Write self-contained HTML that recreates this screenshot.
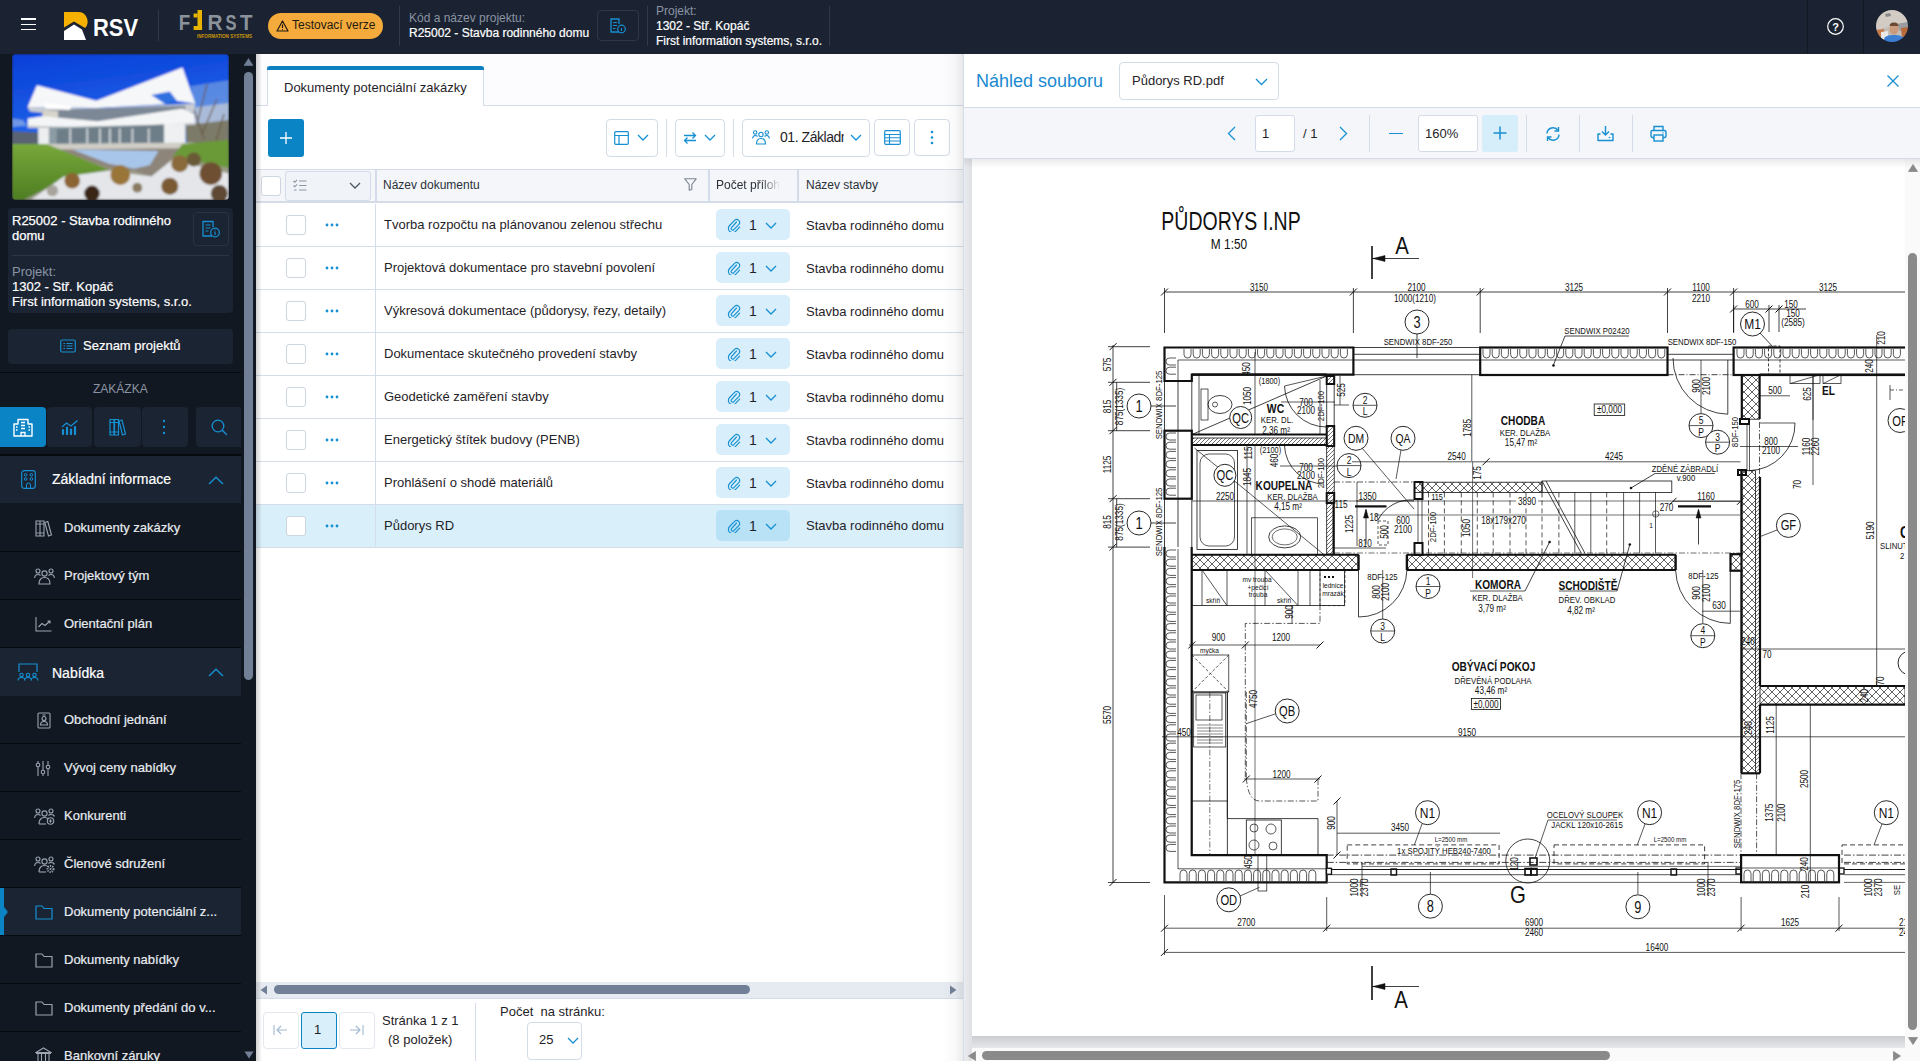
<!DOCTYPE html>
<html><head><meta charset="utf-8">
<style>
*{box-sizing:border-box;margin:0;padding:0}
html,body{width:1920px;height:1061px;overflow:hidden;background:#fff;font-family:"Liberation Sans",sans-serif;color:#1f2328}
.a{position:absolute}
svg{display:block}
#hdr{left:0;top:0;width:1920px;height:54px;background:#1b2332}
.vd{position:absolute;width:1px;background:#2e3a4c}
.wt{color:#fff;-webkit-text-stroke:0.2px #fff}
.gt{color:#8a94a3}
#side{left:0;top:54px;width:256px;height:1007px;background:#121821;overflow:hidden}
.card{position:absolute;background:#1b2433;border-radius:4px}
.item{position:absolute;left:0;width:241px;height:48px;border-bottom:1px solid #05080c}
.item .t{position:absolute;left:64px;top:16px;font-size:13px;color:#e8ecf1;white-space:nowrap;-webkit-text-stroke:0.2px #e8ecf1}
.item svg{position:absolute;left:34px;top:14px}
.sec{position:absolute;left:0;width:241px;height:48px;background:#1b2433}
.tx{font-size:13px;color:#1f2328;white-space:nowrap}
.btn{border:1px solid #d3dce8;border-radius:4px;background:#fff}
.sec .t{position:absolute;left:52px;top:15px;font-size:14px;color:#fff;-webkit-text-stroke:0.2px #fff}
</style></head><body>
<!-- HEADER -->
<div id="hdr" class="a">
  <div class="a" style="left:21px;top:18px;width:15px;height:1.5px;background:#fff"></div>
  <div class="a" style="left:21px;top:23.5px;width:15px;height:1.5px;background:#fff"></div>
  <div class="a" style="left:21px;top:28.5px;width:15px;height:1.5px;background:#fff"></div>
  <!-- RSV logo -->
  <svg class="a" style="left:63px;top:11px" width="76" height="31" viewBox="0 0 76 31">
    <path d="M1 1 H14.5 A9.5 9.5 0 0 1 22 17 L11 10.5 L1 16.5 Z" fill="#f6b000"/>
    <path d="M1 20 L11 13.5 L19 18.5 L23 29 H1 Z" fill="#fff"/>
    <text x="30" y="25.3" font-family="Liberation Sans" font-weight="bold" font-size="23" fill="#fff" textLength="45" lengthAdjust="spacingAndGlyphs">RSV</text>
  </svg>
  <div class="vd" style="left:158px;top:10px;height:31px"></div>
  <!-- FIRST logo -->
  <svg class="a" style="left:178px;top:9px" width="76" height="31" viewBox="0 0 76 31">
    <g font-family="Liberation Sans" font-weight="bold" font-size="22" fill="#8a929c">
    <text x="0.75" y="21" textLength="11.5" lengthAdjust="spacingAndGlyphs">F</text>
    <text x="29.5" y="21" textLength="15" lengthAdjust="spacingAndGlyphs">R</text>
    <text x="47.5" y="21" textLength="11" lengthAdjust="spacingAndGlyphs">S</text>
    <text x="62" y="21" textLength="12.5" lengthAdjust="spacingAndGlyphs">T</text>
    </g>
    <rect x="19.5" y="1" width="4.5" height="20" fill="#e8b400"/>
    <rect x="15.6" y="4.5" width="4" height="4" fill="#e8b400"/>
    <rect x="15.6" y="17" width="8.5" height="4" fill="#e8b400"/>
    <text x="19" y="28.8" font-family="Liberation Sans" font-weight="bold" font-size="5.5" fill="#c9960a" textLength="55" lengthAdjust="spacingAndGlyphs">INFORMATION SYSTEMS</text>
  </svg>
  <div class="a" style="left:268px;top:13px;width:115px;height:26px;border-radius:13px;background:#f5ab3c"></div>
  <svg class="a" style="left:276px;top:20px" width="13" height="12" viewBox="0 0 13 12"><path d="M6.5 1 L12 11 H1 Z" fill="none" stroke="#1f1a10" stroke-width="1.2" stroke-linejoin="round"/><path d="M6.5 4.5 V8" stroke="#1f1a10" stroke-width="1.2"/><circle cx="6.5" cy="9.5" r="0.6" fill="#1f1a10"/></svg>
  <div class="a" style="left:292px;top:18px;font-size:12px;color:#1f1a10">Testovací verze</div>
  <div class="vd" style="left:399px;top:6px;height:40px"></div>
  <div class="a gt" style="left:409px;top:11px;font-size:12px">Kód a název projektu:</div>
  <div class="a wt" style="left:409px;top:26px;font-size:12px">R25002 - Stavba rodinného domu</div>
  <div class="a" style="left:597px;top:10px;width:42px;height:31px;border:1px solid #2c3849;border-radius:4px"></div>
  <svg class="a" style="left:609px;top:18px" width="18" height="16" viewBox="0 0 18 16"><path d="M10 14 H2 V1 H10 V6" fill="none" stroke="#1690d2" stroke-width="1.3"/><path d="M4 4.5 H8 M4 7.5 H8 M4 10.5 H6.5" stroke="#1690d2" stroke-width="1.2"/><circle cx="12.5" cy="11" r="3.8" fill="none" stroke="#1690d2" stroke-width="1.2"/><path d="M12.5 10 V13" stroke="#1690d2" stroke-width="1.1"/></svg>
  <div class="vd" style="left:647px;top:6px;height:40px"></div>
  <div class="a gt" style="left:656px;top:4px;font-size:12px">Projekt:</div>
  <div class="a wt" style="left:656px;top:19px;font-size:12px">1302 - Stř. Kopáč</div>
  <div class="a wt" style="left:656px;top:34px;font-size:12px">First information systems, s.r.o.</div>
  <div class="vd" style="left:829px;top:6px;height:40px"></div>
  <div class="a" style="left:1807px;top:0;width:1px;height:54px;background:#111822"></div>
  <div class="a" style="left:1863px;top:0;width:1px;height:54px;background:#111822"></div>
  <svg class="a" style="left:1826px;top:17px" width="19" height="19" viewBox="0 0 19 19"><circle cx="9.5" cy="9.5" r="7.8" fill="none" stroke="#fff" stroke-width="1.2"/><text x="9.5" y="13.5" text-anchor="middle" font-family="Liberation Sans" font-weight="bold" font-size="11" fill="#fff">?</text></svg>
  <svg class="a" style="left:1876px;top:10px" width="32" height="32" viewBox="0 0 32 32"><defs><clipPath id="av"><circle cx="16" cy="16" r="16"/></clipPath><filter id="avb"><feGaussianBlur stdDeviation="0.6"/></filter></defs>
  <g clip-path="url(#av)" filter="url(#avb)"><rect width="32" height="32" fill="#c4bdb5"/><path d="M0 0 H32 V12 L0 20 Z" fill="#d2ccc4"/><path d="M9 4 L14 3 L15 6 L10 7 Z" fill="#8a8a8a"/><path d="M20 14 L32 12 L32 20 L24 21 Z" fill="#9a9ca0"/>
  <path d="M0 20 L8 19 L9 28 L0 30 Z" fill="#c77a48"/><path d="M5 22 L12 21 L12 30 L5 31 Z" fill="#e8e8e6"/><path d="M25 18 L32 17 L32 26 L26 27 Z" fill="#b86a3a"/>
  <ellipse cx="18" cy="19" rx="4.6" ry="5.8" fill="#c99a7c"/><path d="M13.5 16 Q14 12 18 12.5 Q22 12 22.5 16 Z" fill="#6a4a30"/>
  <path d="M7 32 L9 27 Q13 24.5 18 25 Q23 24.5 27 27 L29 32 Z" fill="#3a7ed4"/></g></svg>
</div>


<!-- SIDEBAR -->
<div id="side" class="a">
  <svg class="a" style="left:12px;top:0px" width="217" height="146" viewBox="0 0 217 146">
    <defs>
      <linearGradient id="sky" x1="0" y1="0" x2="0.2" y2="1"><stop offset="0" stop-color="#0a3fd8"/><stop offset="0.5" stop-color="#1a5ee6"/><stop offset="0.8" stop-color="#4d8ae6"/></linearGradient>
      <linearGradient id="grass" x1="0" y1="0" x2="0" y2="1"><stop offset="0" stop-color="#78a83a"/><stop offset="1" stop-color="#4e7e22"/></linearGradient>
      <filter id="bl"><feGaussianBlur stdDeviation="1"/></filter>
      <clipPath id="pc"><rect width="217" height="146" rx="4"/></clipPath>
    </defs>
    <g clip-path="url(#pc)" filter="url(#bl)"><rect width="217" height="146" fill="url(#sky)"/><rect x="0" y="90" width="217" height="56" fill="#9a9a86"/>
<path d="M179.0 31.9 L216.9 26.3 L216.9 63.0 L181.8 60.2 Z" fill="#8fb0e0" opacity="0.55"/>
<path d="M0.1 64.5 L10.7 65.9 L15.0 71.5 L0.1 72.9 Z" fill="#a9c2e6" opacity="0.6"/>
<path d="M0.1 77.2 L26.3 78.6 L26.3 89.9 L0.1 89.9 Z" fill="#5a6472" />
<path d="M173.3 54.6 L216.9 48.9 L216.9 77.2 L176.2 77.2 Z" fill="#a9bbd8" /><path d="M173.3 71.5 L216.9 65.9 L216.9 97.0 L174.8 88.5 Z" fill="#7c7a68" /><path d="M195 30 L185 70 M205 45 L190 80 M180 50 L192 85 M212 60 L200 100" stroke="#6a5a4a" stroke-width="1.2" fill="none"/>
<path d="M15.7 53.1 L84.3 54.6 L183.2 49.6 L181.8 57.4 L84.3 64.5 L17.8 57.4 Z" fill="#c9cdd3" />
<path d="M30.5 56.0 L173.3 51.7 L173.3 61.6 L85.7 68.0 L30.5 64.5 Z" fill="#7d8896" />
<path d="M30.5 56.0 L46.1 56.7 L46.1 64.5 L30.5 64.5 Z" fill="#d8d4cc" />
<path d="M139.4 41.1 L157.8 37.6 L164.9 46.8 L153.5 50.3 Z" fill="#2f6fe0" />
<path d="M15.7 53.1 L24.9 31.2 L84.3 46.8 L170.5 13.6 L183.2 49.6 L164.9 46.8 L157.8 37.6 L139.4 41.1 L153.5 50.3 L84.3 53.9 Z" fill="#f6f7f8" />
<path d="M31.9 48.9 L60.2 52.4 L57.4 56.0 L33.4 54.6 Z" fill="#ffffff" />
<path d="M15.7 64.5 L30.5 62.3 L85.7 67.3 L170.5 54.6 L181.8 60.2 L183.2 70.1 L85.7 75.1 L15.7 73.7 Z" fill="#f4f5f6" />
<path d="M15.7 71.5 L85.7 73.7 L183.2 68.7 L183.2 70.8 L85.7 75.5 L15.7 74.1 Z" fill="#c4c8ce" />
<path d="M26.3 73.7 L173.3 70.1 L173.3 90.6 L26.3 90.6 Z" fill="#8c9ca4" />
<path d="M44.7 75.1 L152.1 70.8 L152.1 89.9 L44.7 89.9 Z" fill="#6e7e88" />
<path d="M26.3 73.7 L36.9 73.7 L36.9 90.6 L26.3 90.6 Z" fill="#eceef0" />
<path d="M152.1 70.1 L173.3 69.4 L173.3 90.6 L152.1 90.6 Z" fill="#eef0f2" />
<path d="M57.4 74.4 L59.1 74.4 L59.1 89.9 L57.4 89.9 Z" fill="#d6dadd" />
<path d="M74.4 74.4 L76.1 74.4 L76.1 89.9 L74.4 89.9 Z" fill="#d6dadd" />
<path d="M87.1 74.4 L88.8 74.4 L88.8 89.9 L87.1 89.9 Z" fill="#d6dadd" />
<path d="M97.0 74.4 L98.7 74.4 L98.7 89.9 L97.0 89.9 Z" fill="#d6dadd" />
<path d="M106.9 74.4 L108.6 74.4 L108.6 89.9 L106.9 89.9 Z" fill="#d6dadd" />
<path d="M119.6 74.4 L121.3 74.4 L121.3 89.9 L119.6 89.9 Z" fill="#d6dadd" />
<path d="M135.9 74.4 L137.6 74.4 L137.6 89.9 L135.9 89.9 Z" fill="#d6dadd" />
<path d="M30.5 89.9 L181.8 88.5 L173.3 97.0 L51.7 97.0 Z" fill="#cfcdc6" />
<path d="M44.7 95.6 L173.3 94.2 L139.4 122.4 L122.4 116.8 L97.0 114.0 Z" fill="#8e857a" />
<path d="M60.2 95.6 L146.5 97.0 L138.0 111.1 L122.4 114.7 L97.0 109.7 Z" fill="#a8c6ea" />
<path d="M0.1 89.9 L34.8 89.9 L51.7 97.0 L97.0 115.4 L51.7 125.3 L12.1 145.8 L0.1 145.8 Z" fill="url(#grass)" />
<path d="M170.5 89.9 L216.9 85.7 L216.9 114.0 L160.6 102.6 Z" fill="#6a9a38" />
<path d="M19.2 145.8 L51.7 122.4 L97.0 116.8 L139.4 122.4 L160.6 105.5 L216.9 119.6 L216.9 145.8 Z" fill="#e4e6ea" />
<circle cx="108.3" cy="121.0" r="9.9" fill="#9a7438"/>
<circle cx="60.2" cy="126.7" r="7.8" fill="#8c6430"/>
<circle cx="80.0" cy="139.4" r="7.8" fill="#3a2816"/>
<circle cx="157.8" cy="132.3" r="8.5" fill="#7a5a32"/>
<circle cx="167.7" cy="109.7" r="8.5" fill="#8a6a3a"/>
<circle cx="198.8" cy="119.6" r="11.3" fill="#6e5030"/>
<circle cx="181.8" cy="105.5" r="7.1" fill="#6a5a38"/>
<circle cx="125.3" cy="133.7" r="4.9" fill="#8a7a60"/>
<circle cx="40.4" cy="136.6" r="5.7" fill="#a8a49c"/>
<circle cx="207.3" cy="139.4" r="8.5" fill="#5e4a34"/></g></svg>
  <div class="card" style="left:8px;top:154px;width:225px;height:105px"></div>
  <div class="a wt" style="left:12px;top:159px;font-size:13px;line-height:15px;width:178px;-webkit-text-stroke:0.25px #fff">R25002 - Stavba rodinného domu</div>
  <div class="a" style="left:193px;top:158px;width:36px;height:34px;border:1px solid #263245;border-radius:4px"></div>
  <svg class="a" style="left:201px;top:166px" width="20" height="18" viewBox="0 0 20 18"><path d="M11 16 H2 V1.5 H12 V7" fill="none" stroke="#1690d2" stroke-width="1.3"/><path d="M4.5 5 H9.5 M4.5 8 H9.5 M4.5 11 H7.5" stroke="#1690d2" stroke-width="1.2"/><circle cx="14" cy="12.5" r="4.3" fill="none" stroke="#1690d2" stroke-width="1.2"/><path d="M14 11.5 V15" stroke="#1690d2" stroke-width="1.2"/><circle cx="14" cy="10" r="0.6" fill="#1690d2"/></svg>
  <div class="a" style="left:12px;top:201px;width:217px;height:1px;background:#2a3648"></div>
  <div class="a gt" style="left:12px;top:210px;font-size:13px;line-height:15px">Projekt:</div>
  <div class="a wt" style="left:12px;top:225px;font-size:13px;line-height:15px">1302 - Stř. Kopáč</div>
  <div class="a wt" style="left:12px;top:240px;font-size:13px;line-height:15px">First information systems, s.r.o.</div>

  <div class="card" style="left:8px;top:275px;width:225px;height:35px"></div>
  <svg class="a" style="left:60px;top:285px" width="16" height="14" viewBox="0 0 16 14"><rect x="0.7" y="1" width="14.6" height="12" rx="1.5" fill="none" stroke="#1690d2" stroke-width="1.2"/><path d="M3.5 4.5 H5 M3.5 7 H5 M3.5 9.5 H5 M6.5 4.5 H12.5 M6.5 7 H12.5 M6.5 9.5 H12.5" stroke="#1690d2" stroke-width="1.2"/></svg>
  <div class="a wt" style="left:83px;top:284px;font-size:13px;line-height:15px">Seznam projektů</div>

  <div class="a" style="left:0;top:318px;width:241px;height:1px;background:#070a0f"></div>
  <div class="a" style="left:93px;top:328px;font-size:12px;color:#8b95a3">ZAKÁZKA</div>
  <div class="a" style="left:0;top:353px;width:46px;height:40px;background:#0b84c6;border-radius:0 4px 4px 0"></div>
  <div class="card" style="left:47px;top:353px;width:45px;height:40px"></div>
  <div class="card" style="left:94px;top:353px;width:47px;height:40px"></div>
  <div class="card" style="left:142px;top:353px;width:46px;height:40px"></div>
  <div class="card" style="left:196px;top:353px;width:45px;height:40px;border-radius:4px 0 0 4px"></div>
  <!-- icon: building (white) -->
  <svg class="a" style="left:13px;top:364px" width="20" height="19" viewBox="0 0 20 19"><path d="M1 18 V6 H5 V1.5 H15 V6 H19 V18 Z" fill="none" stroke="#fff" stroke-width="1.4" stroke-linejoin="round"/><path d="M8 18 V14.5 H12 V18" fill="none" stroke="#fff" stroke-width="1.3"/><path d="M8 4.5 H12 M8 7.5 H12 M8 10.5 H12 M3 9 H4.5 M3 12 H4.5 M15.5 9 H17 M15.5 12 H17" stroke="#fff" stroke-width="1.5"/></svg>
  <!-- icon: chart -->
  <svg class="a" style="left:61px;top:365px" width="18" height="16" viewBox="0 0 18 16"><path d="M1 8 L5.5 4 L10 7 L16.5 1.5" fill="none" stroke="#1690d2" stroke-width="1.3"/><path d="M2 15 V11 M6 15 V8.5 M10 15 V10.5 M14 15 V8" stroke="#1690d2" stroke-width="2.2" stroke-linecap="round"/></svg>
  <!-- icon: books -->
  <svg class="a" style="left:109px;top:364px" width="17" height="18" viewBox="0 0 17 18"><path d="M1 1.5 H5 V17 H1 Z M5.5 1.5 H9.5 V17 H5.5 Z" fill="none" stroke="#1690d2" stroke-width="1.2"/><path d="M10 3 L13 2 L16.5 16 L13.5 17 Z" fill="none" stroke="#1690d2" stroke-width="1.2"/><path d="M1 4.5 H9.5 M1 14 H9.5" stroke="#1690d2" stroke-width="1"/></svg>
  <!-- icon: vertical dots -->
  <svg class="a" style="left:162px;top:365px" width="4" height="16" viewBox="0 0 4 16"><circle cx="2" cy="2" r="1.2" fill="#1690d2"/><circle cx="2" cy="8" r="1.2" fill="#1690d2"/><circle cx="2" cy="14" r="1.2" fill="#1690d2"/></svg>
  <!-- icon: search -->
  <svg class="a" style="left:211px;top:365px" width="17" height="17" viewBox="0 0 17 17"><circle cx="7" cy="7" r="5.8" fill="none" stroke="#1690d2" stroke-width="1.3"/><path d="M11.3 11.3 L16 16" stroke="#1690d2" stroke-width="1.3"/></svg>

  <div class="a" style="left:0;top:400px;width:241px;height:2px;background:#070a0f"></div>
  <div class="sec" style="top:402px;height:47px"><div class="t">Základní informace</div>
    <svg class="a" style="left:21px;top:14px" width="15" height="19" viewBox="0 0 15 19"><rect x="0.7" y="0.7" width="13.6" height="17.6" rx="2.5" fill="none" stroke="#1690d2" stroke-width="1.2"/><circle cx="4.6" cy="4.8" r="1.3" fill="none" stroke="#1690d2" stroke-width="1"/><circle cx="10.4" cy="4.8" r="1.3" fill="none" stroke="#1690d2" stroke-width="1"/><circle cx="4.6" cy="9" r="1.3" fill="none" stroke="#1690d2" stroke-width="1"/><circle cx="10.4" cy="9" r="1.3" fill="none" stroke="#1690d2" stroke-width="1"/><path d="M5.5 18 V15 A2 2 0 0 1 9.5 15 V18" fill="none" stroke="#1690d2" stroke-width="1"/></svg>
    <svg class="a" style="left:208px;top:20px" width="16" height="9" viewBox="0 0 16 9"><path d="M1 8 L8 1.3 L15 8" fill="none" stroke="#1690d2" stroke-width="1.5"/></svg>
  </div>
  <div class="item" style="top:450px;"><div class="t" style="top:16px">Dokumenty zakázky</div><svg class="a" style="left:35px;top:16px" width="18" height="17" viewBox="0 0 18 17"><path d="M1 1 H5 V16 H1 Z M5 1 H9 V16 H5 Z" fill="none" stroke="#9aa4b2" stroke-width="1.1"/><path d="M9.8 2.5 L12.8 1.5 L16.5 15 L13.5 16 Z" fill="none" stroke="#9aa4b2" stroke-width="1.1"/><path d="M1 4 H9 M1 13 H9" stroke="#9aa4b2" stroke-width="0.9"/></svg></div>
<div class="item" style="top:498px;"><div class="t" style="top:16px">Projektový tým</div><svg class="a" style="left:34px;top:16px" width="21" height="17" viewBox="0 0 21 17"><circle cx="10.5" cy="5.5" r="2.6" fill="none" stroke="#9aa4b2" stroke-width="1.1"/><path d="M5 16 C5 11 8 9.5 10.5 9.5 C13 9.5 16 11 16 16 Z" fill="none" stroke="#9aa4b2" stroke-width="1.1"/><circle cx="4" cy="3" r="2" fill="none" stroke="#9aa4b2" stroke-width="1.1"/><circle cx="17" cy="3" r="2" fill="none" stroke="#9aa4b2" stroke-width="1.1"/><path d="M0.6 10 C0.8 7.5 2.5 6.5 4 6.5 C5 6.5 6 7 6.5 7.5 M20.4 10 C20.2 7.5 18.5 6.5 17 6.5 C16 6.5 15 7 14.5 7.5" fill="none" stroke="#9aa4b2" stroke-width="1.1"/></svg></div>
<div class="item" style="top:546px;"><div class="t" style="top:16px">Orientační plán</div><svg class="a" style="left:35px;top:16px" width="17" height="16" viewBox="0 0 17 16"><path d="M1 1 V15 H16.5" fill="none" stroke="#9aa4b2" stroke-width="1.1"/><path d="M3.5 11 L7 7.5 L10 9.5 L15 5 M12.5 5 H15 V7.5" fill="none" stroke="#9aa4b2" stroke-width="1.1"/></svg></div>
<div class="sec" style="top:594px;height:48px"><div class="t" style="top:17px">Nabídka</div>
    <svg class="a" style="left:17px;top:15px" width="22" height="18" viewBox="0 0 22 18"><path d="M2 9 V1 H20 V9" fill="none" stroke="#1690d2" stroke-width="1.2"/><circle cx="4.5" cy="12" r="1.7" fill="none" stroke="#1690d2" stroke-width="1.1"/><circle cx="11" cy="12" r="1.7" fill="none" stroke="#1690d2" stroke-width="1.1"/><circle cx="17.5" cy="12" r="1.7" fill="none" stroke="#1690d2" stroke-width="1.1"/><path d="M1 17.5 C1 15 2.5 14.5 4.5 14.5 C6.5 14.5 8 15 8 17.5 M7.5 17.5 C7.5 15 9 14.5 11 14.5 C13 14.5 14.5 15 14.5 17.5 M14 17.5 C14 15 15.5 14.5 17.5 14.5 C19.5 14.5 21 15 21 17.5" fill="none" stroke="#1690d2" stroke-width="1.1"/></svg>
    <svg class="a" style="left:208px;top:20px" width="16" height="9" viewBox="0 0 16 9"><path d="M1 8 L8 1.3 L15 8" fill="none" stroke="#1690d2" stroke-width="1.5"/></svg>
  </div>
<div class="item" style="top:642px;"><div class="t" style="top:16px">Obchodní jednání</div><svg class="a" style="left:37px;top:16px" width="14" height="17" viewBox="0 0 14 17"><rect x="1" y="1" width="12" height="15" rx="1" fill="none" stroke="#9aa4b2" stroke-width="1.1"/><circle cx="7" cy="6.5" r="2" fill="none" stroke="#9aa4b2" stroke-width="1.1"/><path d="M3.5 13 C3.5 10.5 5 9.5 7 9.5 C9 9.5 10.5 10.5 10.5 13 Z" fill="none" stroke="#9aa4b2" stroke-width="1.1"/><path d="M5.5 3 H8.5" stroke="#9aa4b2" stroke-width="1"/></svg></div>
<div class="item" style="top:690px;"><div class="t" style="top:16px">Vývoj ceny nabídky</div><svg class="a" style="left:35px;top:16px" width="16" height="17" viewBox="0 0 16 17"><path d="M3 1 V16 M8 1 V16 M13 1 V16" stroke="#9aa4b2" stroke-width="1.1"/><circle cx="3" cy="5" r="1.8" fill="#131922" stroke="#9aa4b2" stroke-width="1.1"/><circle cx="8" cy="12" r="1.8" fill="#131922" stroke="#9aa4b2" stroke-width="1.1"/><circle cx="13" cy="7" r="1.8" fill="#131922" stroke="#9aa4b2" stroke-width="1.1"/></svg></div>
<div class="item" style="top:738px;"><div class="t" style="top:16px">Konkurenti</div><svg class="a" style="left:34px;top:16px" width="21" height="17" viewBox="0 0 21 17"><circle cx="10.5" cy="5.5" r="2.6" fill="none" stroke="#9aa4b2" stroke-width="1.1"/><path d="M5 16 C5 11 8 9.5 10.5 9.5 C12 9.5 13.5 10 14.5 11" fill="none" stroke="#9aa4b2" stroke-width="1.1"/><path d="M5 16 H12" stroke="#9aa4b2" stroke-width="1.1"/><circle cx="4" cy="3" r="2" fill="none" stroke="#9aa4b2" stroke-width="1.1"/><circle cx="17" cy="3" r="2" fill="none" stroke="#9aa4b2" stroke-width="1.1"/><path d="M0.6 10 C0.8 7.5 2.5 6.5 4 6.5 C5 6.5 6 7 6.5 7.5 M20.4 8.5 C20 7 18.5 6.5 17 6.5 C16 6.5 15 7 14.5 7.5" fill="none" stroke="#9aa4b2" stroke-width="1.1"/><circle cx="16.5" cy="13" r="3.2" fill="none" stroke="#9aa4b2" stroke-width="1.1"/><path d="M16.5 11.3 V14.7 M14.8 13 H18.2" stroke="#9aa4b2" stroke-width="1"/></svg></div>
<div class="item" style="top:786px;"><div class="t" style="top:16px">Členové sdružení</div><svg class="a" style="left:34px;top:16px" width="21" height="17" viewBox="0 0 21 17"><circle cx="10.5" cy="5.5" r="2.6" fill="none" stroke="#9aa4b2" stroke-width="1.1"/><path d="M5 16 C5 11 8 9.5 10.5 9.5 C12 9.5 13.5 10 14.5 11" fill="none" stroke="#9aa4b2" stroke-width="1.1"/><path d="M5 16 H12" stroke="#9aa4b2" stroke-width="1.1"/><circle cx="4" cy="3" r="2" fill="none" stroke="#9aa4b2" stroke-width="1.1"/><circle cx="17" cy="3" r="2" fill="none" stroke="#9aa4b2" stroke-width="1.1"/><path d="M0.6 10 C0.8 7.5 2.5 6.5 4 6.5 C5 6.5 6 7 6.5 7.5 M20.4 8.5 C20 7 18.5 6.5 17 6.5 C16 6.5 15 7 14.5 7.5" fill="none" stroke="#9aa4b2" stroke-width="1.1"/><circle cx="16.5" cy="13" r="3" fill="none" stroke="#9aa4b2" stroke-width="2" stroke-dasharray="1.2 1"/><circle cx="16.5" cy="13" r="1" fill="#9aa4b2"/></svg></div>
<div class="item" style="top:834px;background:#1b2433;"><div class="t" style="top:16px">Dokumenty potenciální z...</div><svg class="a" style="left:35px;top:17px" width="18" height="15" viewBox="0 0 18 15"><path d="M1 1 H7 L9 3.5 H17 V14 H1 Z" fill="none" stroke="#1690d2" stroke-width="1.2" stroke-linejoin="round"/></svg></div>
<div class="a" style="left:0;top:834px;width:4px;height:47px;background:#0b84c6"></div><svg class="a" style="left:4px;top:853px" width="4" height="10" viewBox="0 0 4 10"><path d="M0 0 L4 5 L0 10 Z" fill="#0b84c6"/></svg>
<div class="item" style="top:882px;"><div class="t" style="top:16px">Dokumenty nabídky</div><svg class="a" style="left:35px;top:17px" width="18" height="15" viewBox="0 0 18 15"><path d="M1 1 H7 L9 3.5 H17 V14 H1 Z" fill="none" stroke="#9aa4b2" stroke-width="1.2" stroke-linejoin="round"/></svg></div>
<div class="item" style="top:930px;"><div class="t" style="top:16px">Dokumenty předání do v...</div><svg class="a" style="left:35px;top:17px" width="18" height="15" viewBox="0 0 18 15"><path d="M1 1 H7 L9 3.5 H17 V14 H1 Z" fill="none" stroke="#9aa4b2" stroke-width="1.2" stroke-linejoin="round"/></svg></div>
<div class="item" style="top:978px;"><div class="t" style="top:16px">Bankovní záruky</div><svg class="a" style="left:35px;top:15px" width="17" height="17" viewBox="0 0 17 17"><path d="M1 5.5 L8.5 1 L16 5.5 Z" fill="none" stroke="#9aa4b2" stroke-width="1.1"/><path d="M3 7 V14 M6.5 7 V14 M10.5 7 V14 M14 7 V14 M1 15.5 H16 M1 6.5 H16" stroke="#9aa4b2" stroke-width="1.1"/></svg></div>
  <div class="a" style="left:244px;top:4px;width:9px;height:8px"><svg width="9" height="8" viewBox="0 0 9 8"><path d="M4.5 0.5 L9 7.5 H0 Z" fill="#718096" stroke="#718096" stroke-width="0.6" stroke-linejoin="round"/></svg></div>
  <div class="a" style="left:244px;top:18px;width:9px;height:608px;border-radius:5px;background:#718096"></div>
  <div class="a" style="left:244px;top:997px;width:10px;height:8px"><svg width="10" height="8" viewBox="0 0 10 8"><path d="M0.5 0.5 H9.5 L5 7.5 Z" fill="#718096"/></svg></div>
</div>


<!-- MIDDLE -->
<div class="a" style="left:256px;top:54px;width:707px;height:1007px;background:#fff;overflow:hidden">
  <div class="a" style="left:0;top:0;width:707px;height:52px;background:#fcfcfe;border-bottom:1px solid #d3dce8"></div>
  <div class="a" style="left:11px;top:12px;width:217px;height:40px;background:#fff;border:1px solid #d3dce8;border-bottom:none;border-top:none"></div>
  <div class="a" style="left:11px;top:12px;width:217px;height:4px;background:#0b7fc0;border-radius:3px 3px 0 0"></div>
  <div class="a tx" style="left:28px;top:26px">Dokumenty potenciální zakázky</div>
</div>
<div class="a" style="left:268px;top:119px;width:36px;height:38px;background:#0b84c6;border-radius:3px"></div>
<svg class="a" style="left:279px;top:131px" width="14" height="14" viewBox="0 0 14 14"><path d="M7 1 V13 M1 7 H13" stroke="#fff" stroke-width="1.3"/></svg>
<!-- toolbar -->
<div class="a btn" style="left:606px;top:119px;width:52px;height:38px"></div>
<svg class="a" style="left:614px;top:131px" width="15" height="14" viewBox="0 0 15 14"><rect x="0.7" y="0.7" width="13.6" height="12.6" rx="1" fill="none" stroke="#1690d2" stroke-width="1.2"/><path d="M0.7 4.5 H14.3 M5 4.5 V13.3" stroke="#1690d2" stroke-width="1.2"/></svg>
<svg class="a" style="left:637px;top:134px" width="12" height="7" viewBox="0 0 12 7"><path d="M1 1 L6 6 L11 1" fill="none" stroke="#1690d2" stroke-width="1.3"/></svg>
<div class="a" style="left:666px;top:119px;width:1px;height:38px;background:#d5dde8"></div>
<div class="a btn" style="left:675px;top:119px;width:50px;height:38px"></div>
<svg class="a" style="left:683px;top:131px" width="14" height="14" viewBox="0 0 14 14"><path d="M1 4.5 H12.5 M9.5 1.5 L12.5 4.5 L9.5 7.5 M13 9.5 H1.5 M4.5 6.5 L1.5 9.5 L4.5 12.5" fill="none" stroke="#1690d2" stroke-width="1.3"/></svg>
<svg class="a" style="left:704px;top:134px" width="12" height="7" viewBox="0 0 12 7"><path d="M1 1 L6 6 L11 1" fill="none" stroke="#1690d2" stroke-width="1.3"/></svg>
<div class="a" style="left:733px;top:119px;width:1px;height:38px;background:#d5dde8"></div>
<div class="a btn" style="left:742px;top:119px;width:128px;height:38px"></div>
<svg class="a" style="left:752px;top:130px" width="18" height="15" viewBox="0 0 18 15"><circle cx="9" cy="4.5" r="2.2" fill="none" stroke="#1690d2" stroke-width="1.1"/><path d="M4.5 14 C4.5 10 7 8.5 9 8.5 C11 8.5 13.5 10 13.5 14 Z" fill="none" stroke="#1690d2" stroke-width="1.1"/><circle cx="3.2" cy="2.5" r="1.7" fill="none" stroke="#1690d2" stroke-width="1.1"/><circle cx="14.8" cy="2.5" r="1.7" fill="none" stroke="#1690d2" stroke-width="1.1"/><path d="M0.6 8.5 C0.8 6.3 2 5.5 3.2 5.5 C4 5.5 5 6 5.5 6.5 M17.4 8.5 C17.2 6.3 16 5.5 14.8 5.5 C14 5.5 13 6 12.5 6.5" fill="none" stroke="#1690d2" stroke-width="1.1"/></svg>
<div class="a" style="left:780px;top:129px;width:64px;overflow:hidden;white-space:nowrap;font-size:14px;letter-spacing:-0.45px;color:#1f2328">01. Základní</div>
<svg class="a" style="left:850px;top:134px" width="12" height="7" viewBox="0 0 12 7"><path d="M1 1 L6 6 L11 1" fill="none" stroke="#1690d2" stroke-width="1.3"/></svg>
<div class="a btn" style="left:874px;top:119px;width:36px;height:37px"></div>
<svg class="a" style="left:884px;top:130px" width="17" height="15" viewBox="0 0 17 15"><rect x="0.7" y="0.7" width="15.6" height="13.6" rx="1" fill="none" stroke="#1690d2" stroke-width="1.2"/><path d="M0.7 4.5 H16.3 M0.7 7.8 H16.3 M0.7 11 H16.3 M5.5 4.5 V14" stroke="#1690d2" stroke-width="1.1"/></svg>
<div class="a btn" style="left:914px;top:119px;width:36px;height:37px"></div>
<svg class="a" style="left:930px;top:130px" width="4" height="15" viewBox="0 0 4 15"><circle cx="2" cy="2" r="1.3" fill="#1690d2"/><circle cx="2" cy="7.5" r="1.3" fill="#1690d2"/><circle cx="2" cy="13" r="1.3" fill="#1690d2"/></svg>
<!-- table header -->
<div class="a" style="left:256px;top:169px;width:707px;height:34px;background:#f4f6f9;border-top:1px solid #d3dce8;border-bottom:2px solid #d3dce8"></div>
<div class="a" style="left:261px;top:176px;width:20px;height:20px;border:1px solid #ccd5e0;border-radius:3px;background:#fff"></div>
<div class="a" style="left:285px;top:171px;width:86px;height:30px;border:1px solid #d3dce8;border-radius:3px;background:#f0f3f7"></div>
<svg class="a" style="left:293px;top:179px" width="14" height="13" viewBox="0 0 14 13"><path d="M0.5 2 L1.8 3.3 L4 0.8 M0.5 6.5 L1.8 7.8 L4 5.3 M1 11 H3.5 M6 2 H13.5 M6 6.5 H13.5 M6 11 H13.5" fill="none" stroke="#8b95a3" stroke-width="1.1"/></svg>
<svg class="a" style="left:349px;top:182px" width="12" height="7" viewBox="0 0 12 7"><path d="M1 1 L6 6 L11 1" fill="none" stroke="#4a5563" stroke-width="1.3"/></svg>
<div class="a" style="left:375px;top:170px;width:2px;height:33px;background:#d3dce8"></div>
<div class="a" style="left:383px;top:178px;font-size:12px;color:#2a3038">Název dokumentu</div>
<svg class="a" style="left:684px;top:178px" width="13" height="13" viewBox="0 0 13 13"><path d="M0.8 0.8 H12.2 L7.8 6.5 V11.5 L5.2 12.2 V6.5 Z" fill="none" stroke="#7a8593" stroke-width="1.1" stroke-linejoin="round"/></svg>
<div class="a" style="left:708px;top:170px;width:2px;height:33px;background:#d3dce8"></div>
<div class="a" style="left:716px;top:178px;width:64px;font-size:12px;color:#2a3038;white-space:nowrap;overflow:hidden;-webkit-mask-image:linear-gradient(90deg,#000 70%,transparent)">Počet příloh</div>
<div class="a" style="left:797px;top:170px;width:2px;height:33px;background:#d3dce8"></div>
<div class="a" style="left:806px;top:178px;font-size:12px;color:#2a3038">Název stavby</div>
<div class="a" style="left:256px;top:204px;width:707px;height:43px;background:#fff;border-bottom:1px solid #d5dde8"></div>
<div class="a" style="left:286px;top:215px;width:20px;height:20px;border:1px solid #ccd5e0;border-radius:3px;background:#fff"></div>
<svg class="a" style="left:325px;top:223px" width="14" height="4" viewBox="0 0 14 4"><circle cx="2" cy="2" r="1.4" fill="#1690d2"/><circle cx="7" cy="2" r="1.4" fill="#1690d2"/><circle cx="12" cy="2" r="1.4" fill="#1690d2"/></svg>
<div class="a" style="left:375px;top:204px;width:1px;height:43px;background:#d5dde8"></div>
<div class="a tx" style="left:384px;top:217px">Tvorba rozpočtu na plánovanou zelenou střechu</div>
<div class="a" style="left:716px;top:209px;width:74px;height:31px;border-radius:5px;background:#d8eefa"></div>
<svg class="a" style="left:727px;top:218px" width="14" height="14" viewBox="0 0 14 14"><path d="M9.5 4 L4.5 9.5 A1.6 1.6 0 0 0 6.8 11.7 L12 6.3 A3 3 0 0 0 7.8 2.1 L2.6 7.5 A4.2 4.2 0 0 0 8.6 13.4 L12.6 9.2" fill="none" stroke="#1690d2" stroke-width="1.15" stroke-linecap="round"/></svg>
<div class="a tx" style="left:749px;top:217px;font-size:14px">1</div>
<svg class="a" style="left:765px;top:222px" width="12" height="7" viewBox="0 0 12 7"><path d="M1 1 L6 6 L11 1" fill="none" stroke="#1690d2" stroke-width="1.3"/></svg>
<div class="a tx" style="left:806px;top:218px">Stavba rodinného domu</div><div class="a" style="left:256px;top:247px;width:707px;height:43px;background:#fff;border-bottom:1px solid #d5dde8"></div>
<div class="a" style="left:286px;top:258px;width:20px;height:20px;border:1px solid #ccd5e0;border-radius:3px;background:#fff"></div>
<svg class="a" style="left:325px;top:266px" width="14" height="4" viewBox="0 0 14 4"><circle cx="2" cy="2" r="1.4" fill="#1690d2"/><circle cx="7" cy="2" r="1.4" fill="#1690d2"/><circle cx="12" cy="2" r="1.4" fill="#1690d2"/></svg>
<div class="a" style="left:375px;top:247px;width:1px;height:43px;background:#d5dde8"></div>
<div class="a tx" style="left:384px;top:260px">Projektová dokumentace pro stavební povolení</div>
<div class="a" style="left:716px;top:252px;width:74px;height:31px;border-radius:5px;background:#d8eefa"></div>
<svg class="a" style="left:727px;top:261px" width="14" height="14" viewBox="0 0 14 14"><path d="M9.5 4 L4.5 9.5 A1.6 1.6 0 0 0 6.8 11.7 L12 6.3 A3 3 0 0 0 7.8 2.1 L2.6 7.5 A4.2 4.2 0 0 0 8.6 13.4 L12.6 9.2" fill="none" stroke="#1690d2" stroke-width="1.15" stroke-linecap="round"/></svg>
<div class="a tx" style="left:749px;top:260px;font-size:14px">1</div>
<svg class="a" style="left:765px;top:265px" width="12" height="7" viewBox="0 0 12 7"><path d="M1 1 L6 6 L11 1" fill="none" stroke="#1690d2" stroke-width="1.3"/></svg>
<div class="a tx" style="left:806px;top:261px">Stavba rodinného domu</div><div class="a" style="left:256px;top:290px;width:707px;height:43px;background:#fff;border-bottom:1px solid #d5dde8"></div>
<div class="a" style="left:286px;top:301px;width:20px;height:20px;border:1px solid #ccd5e0;border-radius:3px;background:#fff"></div>
<svg class="a" style="left:325px;top:309px" width="14" height="4" viewBox="0 0 14 4"><circle cx="2" cy="2" r="1.4" fill="#1690d2"/><circle cx="7" cy="2" r="1.4" fill="#1690d2"/><circle cx="12" cy="2" r="1.4" fill="#1690d2"/></svg>
<div class="a" style="left:375px;top:290px;width:1px;height:43px;background:#d5dde8"></div>
<div class="a tx" style="left:384px;top:303px">Výkresová dokumentace (půdorysy, řezy, detaily)</div>
<div class="a" style="left:716px;top:295px;width:74px;height:31px;border-radius:5px;background:#d8eefa"></div>
<svg class="a" style="left:727px;top:304px" width="14" height="14" viewBox="0 0 14 14"><path d="M9.5 4 L4.5 9.5 A1.6 1.6 0 0 0 6.8 11.7 L12 6.3 A3 3 0 0 0 7.8 2.1 L2.6 7.5 A4.2 4.2 0 0 0 8.6 13.4 L12.6 9.2" fill="none" stroke="#1690d2" stroke-width="1.15" stroke-linecap="round"/></svg>
<div class="a tx" style="left:749px;top:303px;font-size:14px">1</div>
<svg class="a" style="left:765px;top:308px" width="12" height="7" viewBox="0 0 12 7"><path d="M1 1 L6 6 L11 1" fill="none" stroke="#1690d2" stroke-width="1.3"/></svg>
<div class="a tx" style="left:806px;top:304px">Stavba rodinného domu</div><div class="a" style="left:256px;top:333px;width:707px;height:43px;background:#fff;border-bottom:1px solid #d5dde8"></div>
<div class="a" style="left:286px;top:344px;width:20px;height:20px;border:1px solid #ccd5e0;border-radius:3px;background:#fff"></div>
<svg class="a" style="left:325px;top:352px" width="14" height="4" viewBox="0 0 14 4"><circle cx="2" cy="2" r="1.4" fill="#1690d2"/><circle cx="7" cy="2" r="1.4" fill="#1690d2"/><circle cx="12" cy="2" r="1.4" fill="#1690d2"/></svg>
<div class="a" style="left:375px;top:333px;width:1px;height:43px;background:#d5dde8"></div>
<div class="a tx" style="left:384px;top:346px">Dokumentace skutečného provedení stavby</div>
<div class="a" style="left:716px;top:338px;width:74px;height:31px;border-radius:5px;background:#d8eefa"></div>
<svg class="a" style="left:727px;top:347px" width="14" height="14" viewBox="0 0 14 14"><path d="M9.5 4 L4.5 9.5 A1.6 1.6 0 0 0 6.8 11.7 L12 6.3 A3 3 0 0 0 7.8 2.1 L2.6 7.5 A4.2 4.2 0 0 0 8.6 13.4 L12.6 9.2" fill="none" stroke="#1690d2" stroke-width="1.15" stroke-linecap="round"/></svg>
<div class="a tx" style="left:749px;top:346px;font-size:14px">1</div>
<svg class="a" style="left:765px;top:351px" width="12" height="7" viewBox="0 0 12 7"><path d="M1 1 L6 6 L11 1" fill="none" stroke="#1690d2" stroke-width="1.3"/></svg>
<div class="a tx" style="left:806px;top:347px">Stavba rodinného domu</div><div class="a" style="left:256px;top:376px;width:707px;height:43px;background:#fff;border-bottom:1px solid #d5dde8"></div>
<div class="a" style="left:286px;top:387px;width:20px;height:20px;border:1px solid #ccd5e0;border-radius:3px;background:#fff"></div>
<svg class="a" style="left:325px;top:395px" width="14" height="4" viewBox="0 0 14 4"><circle cx="2" cy="2" r="1.4" fill="#1690d2"/><circle cx="7" cy="2" r="1.4" fill="#1690d2"/><circle cx="12" cy="2" r="1.4" fill="#1690d2"/></svg>
<div class="a" style="left:375px;top:376px;width:1px;height:43px;background:#d5dde8"></div>
<div class="a tx" style="left:384px;top:389px">Geodetické zaměření stavby</div>
<div class="a" style="left:716px;top:381px;width:74px;height:31px;border-radius:5px;background:#d8eefa"></div>
<svg class="a" style="left:727px;top:390px" width="14" height="14" viewBox="0 0 14 14"><path d="M9.5 4 L4.5 9.5 A1.6 1.6 0 0 0 6.8 11.7 L12 6.3 A3 3 0 0 0 7.8 2.1 L2.6 7.5 A4.2 4.2 0 0 0 8.6 13.4 L12.6 9.2" fill="none" stroke="#1690d2" stroke-width="1.15" stroke-linecap="round"/></svg>
<div class="a tx" style="left:749px;top:389px;font-size:14px">1</div>
<svg class="a" style="left:765px;top:394px" width="12" height="7" viewBox="0 0 12 7"><path d="M1 1 L6 6 L11 1" fill="none" stroke="#1690d2" stroke-width="1.3"/></svg>
<div class="a tx" style="left:806px;top:390px">Stavba rodinného domu</div><div class="a" style="left:256px;top:419px;width:707px;height:43px;background:#fff;border-bottom:1px solid #d5dde8"></div>
<div class="a" style="left:286px;top:430px;width:20px;height:20px;border:1px solid #ccd5e0;border-radius:3px;background:#fff"></div>
<svg class="a" style="left:325px;top:438px" width="14" height="4" viewBox="0 0 14 4"><circle cx="2" cy="2" r="1.4" fill="#1690d2"/><circle cx="7" cy="2" r="1.4" fill="#1690d2"/><circle cx="12" cy="2" r="1.4" fill="#1690d2"/></svg>
<div class="a" style="left:375px;top:419px;width:1px;height:43px;background:#d5dde8"></div>
<div class="a tx" style="left:384px;top:432px">Energetický štítek budovy (PENB)</div>
<div class="a" style="left:716px;top:424px;width:74px;height:31px;border-radius:5px;background:#d8eefa"></div>
<svg class="a" style="left:727px;top:433px" width="14" height="14" viewBox="0 0 14 14"><path d="M9.5 4 L4.5 9.5 A1.6 1.6 0 0 0 6.8 11.7 L12 6.3 A3 3 0 0 0 7.8 2.1 L2.6 7.5 A4.2 4.2 0 0 0 8.6 13.4 L12.6 9.2" fill="none" stroke="#1690d2" stroke-width="1.15" stroke-linecap="round"/></svg>
<div class="a tx" style="left:749px;top:432px;font-size:14px">1</div>
<svg class="a" style="left:765px;top:437px" width="12" height="7" viewBox="0 0 12 7"><path d="M1 1 L6 6 L11 1" fill="none" stroke="#1690d2" stroke-width="1.3"/></svg>
<div class="a tx" style="left:806px;top:433px">Stavba rodinného domu</div><div class="a" style="left:256px;top:462px;width:707px;height:43px;background:#fff;border-bottom:1px solid #d5dde8"></div>
<div class="a" style="left:286px;top:473px;width:20px;height:20px;border:1px solid #ccd5e0;border-radius:3px;background:#fff"></div>
<svg class="a" style="left:325px;top:481px" width="14" height="4" viewBox="0 0 14 4"><circle cx="2" cy="2" r="1.4" fill="#1690d2"/><circle cx="7" cy="2" r="1.4" fill="#1690d2"/><circle cx="12" cy="2" r="1.4" fill="#1690d2"/></svg>
<div class="a" style="left:375px;top:462px;width:1px;height:43px;background:#d5dde8"></div>
<div class="a tx" style="left:384px;top:475px">Prohlášení o shodě materiálů</div>
<div class="a" style="left:716px;top:467px;width:74px;height:31px;border-radius:5px;background:#d8eefa"></div>
<svg class="a" style="left:727px;top:476px" width="14" height="14" viewBox="0 0 14 14"><path d="M9.5 4 L4.5 9.5 A1.6 1.6 0 0 0 6.8 11.7 L12 6.3 A3 3 0 0 0 7.8 2.1 L2.6 7.5 A4.2 4.2 0 0 0 8.6 13.4 L12.6 9.2" fill="none" stroke="#1690d2" stroke-width="1.15" stroke-linecap="round"/></svg>
<div class="a tx" style="left:749px;top:475px;font-size:14px">1</div>
<svg class="a" style="left:765px;top:480px" width="12" height="7" viewBox="0 0 12 7"><path d="M1 1 L6 6 L11 1" fill="none" stroke="#1690d2" stroke-width="1.3"/></svg>
<div class="a tx" style="left:806px;top:476px">Stavba rodinného domu</div><div class="a" style="left:256px;top:505px;width:707px;height:43px;background:#d9effa;border-bottom:1px solid #d5dde8"></div>
<div class="a" style="left:286px;top:516px;width:20px;height:20px;border:1px solid #ccd5e0;border-radius:3px;background:#fff"></div>
<svg class="a" style="left:325px;top:524px" width="14" height="4" viewBox="0 0 14 4"><circle cx="2" cy="2" r="1.4" fill="#1690d2"/><circle cx="7" cy="2" r="1.4" fill="#1690d2"/><circle cx="12" cy="2" r="1.4" fill="#1690d2"/></svg>
<div class="a" style="left:375px;top:505px;width:1px;height:43px;background:#d5dde8"></div>
<div class="a tx" style="left:384px;top:518px">Půdorys RD</div>
<div class="a" style="left:716px;top:510px;width:74px;height:31px;border-radius:5px;background:#b9e2f7"></div>
<svg class="a" style="left:727px;top:519px" width="14" height="14" viewBox="0 0 14 14"><path d="M9.5 4 L4.5 9.5 A1.6 1.6 0 0 0 6.8 11.7 L12 6.3 A3 3 0 0 0 7.8 2.1 L2.6 7.5 A4.2 4.2 0 0 0 8.6 13.4 L12.6 9.2" fill="none" stroke="#1690d2" stroke-width="1.15" stroke-linecap="round"/></svg>
<div class="a tx" style="left:749px;top:518px;font-size:14px">1</div>
<svg class="a" style="left:765px;top:523px" width="12" height="7" viewBox="0 0 12 7"><path d="M1 1 L6 6 L11 1" fill="none" stroke="#1690d2" stroke-width="1.3"/></svg>
<div class="a tx" style="left:806px;top:518px">Stavba rodinného domu</div>
<!-- h scrollbar -->
<div class="a" style="left:256px;top:982px;width:707px;height:16px;background:#e6ebf1"></div>
<svg class="a" style="left:260px;top:985px" width="8" height="10" viewBox="0 0 8 10"><path d="M7 0.5 V9.5 L0.5 5 Z" fill="#718096"/></svg>
<div class="a" style="left:274px;top:985px;width:476px;height:9px;border-radius:5px;background:#718096"></div>
<svg class="a" style="left:949px;top:985px" width="8" height="10" viewBox="0 0 8 10"><path d="M1 0.5 V9.5 L7.5 5 Z" fill="#718096"/></svg>
<div class="a" style="left:256px;top:998px;width:707px;height:1px;background:#d3dce8"></div>
<!-- pagination -->
<div class="a btn" style="left:263px;top:1012px;width:36px;height:37px;border-color:#e3e8ef"></div>
<svg class="a" style="left:273px;top:1024px" width="15" height="12" viewBox="0 0 15 12"><path d="M1 1 V11 M14 6 H4 M8 2 L4 6 L8 10" fill="none" stroke="#9fb8d0" stroke-width="1.1"/></svg>
<div class="a" style="left:301px;top:1012px;width:36px;height:37px;border:1px solid #0b84c6;border-radius:3px;background:#d9effa"></div>
<div class="a" style="left:314px;top:1022px;font-size:13px;color:#1f2328">1</div>
<div class="a btn" style="left:339px;top:1012px;width:36px;height:37px;border-color:#e3e8ef"></div>
<svg class="a" style="left:349px;top:1024px" width="15" height="12" viewBox="0 0 15 12"><path d="M14 1 V11 M1 6 H11 M7 2 L11 6 L7 10" fill="none" stroke="#9fb8d0" stroke-width="1.1"/></svg>
<div class="a tx" style="left:382px;top:1013px">Stránka 1 z 1</div>
<div class="a tx" style="left:388px;top:1032px">(8 položek)</div>
<div class="a" style="left:475px;top:1003px;width:1px;height:58px;background:#d3dce8"></div>
<div class="a tx" style="left:500px;top:1004px;white-space:pre">Počet  na stránku:</div>
<div class="a btn" style="left:527px;top:1022px;width:55px;height:38px"></div>
<div class="a tx" style="left:539px;top:1032px">25</div>
<svg class="a" style="left:567px;top:1037px" width="12" height="7" viewBox="0 0 12 7"><path d="M1 1 L6 6 L11 1" fill="none" stroke="#1690d2" stroke-width="1.3"/></svg>
<!-- panel shadows -->
<div class="a" style="left:256px;top:54px;width:6px;height:1007px;background:linear-gradient(90deg,rgba(0,0,0,0.18),rgba(0,0,0,0))"></div>
<div class="a" style="left:943px;top:54px;width:20px;height:1007px;background:linear-gradient(90deg,rgba(0,0,0,0),rgba(0,0,0,0.025) 60%,rgba(0,0,0,0.08))"></div>
<div class="a" style="left:963px;top:54px;width:1px;height:1007px;background:#d3dce8"></div>


<!-- RIGHT -->
<div class="a" style="left:964px;top:54px;width:956px;height:54px;background:#fff;border-bottom:1px solid #d3dce8"></div>
<div class="a" style="left:976px;top:71px;font-size:18px;color:#1a8ad0;white-space:nowrap">Náhled souboru</div>
<div class="a btn" style="left:1119px;top:62px;width:160px;height:38px"></div>
<div class="a tx" style="left:1132px;top:73px">Půdorys RD.pdf</div>
<svg class="a" style="left:1255px;top:78px" width="13" height="8" viewBox="0 0 13 8"><path d="M1 1 L6.5 6.5 L12 1" fill="none" stroke="#1690d2" stroke-width="1.3"/></svg>
<svg class="a" style="left:1886px;top:74px" width="14" height="14" viewBox="0 0 14 14"><path d="M1.5 1.5 L12.5 12.5 M12.5 1.5 L1.5 12.5" stroke="#1690d2" stroke-width="1.3"/></svg>
<div class="a" style="left:964px;top:108px;width:956px;height:51px;background:#f4f6fa;border-bottom:1px solid #d3dce8"></div>
<svg class="a" style="left:1227px;top:126px" width="9" height="15" viewBox="0 0 9 15"><path d="M8 1 L1.5 7.5 L8 14" fill="none" stroke="#1690d2" stroke-width="1.3"/></svg>
<div class="a" style="left:1255px;top:115px;width:40px;height:37px;background:#fff;border:1px solid #d3dce8;border-radius:3px"></div>
<div class="a tx" style="left:1262px;top:126px">1</div>
<div class="a tx" style="left:1303px;top:126px">/ 1</div>
<svg class="a" style="left:1339px;top:126px" width="9" height="15" viewBox="0 0 9 15"><path d="M1 1 L7.5 7.5 L1 14" fill="none" stroke="#1690d2" stroke-width="1.3"/></svg>
<div class="a" style="left:1369px;top:115px;width:1px;height:37px;background:#d3dce8"></div>
<div class="a" style="left:1389px;top:133px;width:14px;height:1.3px;background:#1690d2"></div>
<div class="a" style="left:1418px;top:115px;width:60px;height:37px;background:#fff;border:1px solid #d3dce8;border-radius:3px"></div>
<div class="a tx" style="left:1425px;top:126px">160%</div>
<div class="a" style="left:1482px;top:115px;width:36px;height:37px;background:#d6edfa;border-radius:3px"></div>
<svg class="a" style="left:1493px;top:126px" width="14" height="14" viewBox="0 0 14 14"><path d="M7 0.5 V13.5 M0.5 7 H13.5" stroke="#1690d2" stroke-width="1.5"/></svg>
<div class="a" style="left:1526px;top:115px;width:1px;height:37px;background:#d3dce8"></div>
<svg class="a" style="left:1545px;top:126px" width="16" height="16" viewBox="0 0 16 16"><path d="M2 7.5 A6 6 0 0 1 13 4.5 M14 8.5 A6 6 0 0 1 3 11.5" fill="none" stroke="#1690d2" stroke-width="1.4"/><path d="M13.5 1 V5 H9.5 M2.5 15 V11 H6.5" fill="none" stroke="#1690d2" stroke-width="1.4"/></svg>
<div class="a" style="left:1579px;top:115px;width:1px;height:37px;background:#d3dce8"></div>
<svg class="a" style="left:1597px;top:125px" width="17" height="17" viewBox="0 0 17 17"><path d="M8.5 1 V10 M5 6.5 L8.5 10 L12 6.5" fill="none" stroke="#1690d2" stroke-width="1.4"/><path d="M3.5 9 H1 V15.5 H16 V9 H13.5" fill="none" stroke="#1690d2" stroke-width="1.4" stroke-linejoin="round"/><circle cx="12.5" cy="12.5" r="0.8" fill="#1690d2"/></svg>
<div class="a" style="left:1632px;top:115px;width:1px;height:37px;background:#d3dce8"></div>
<svg class="a" style="left:1650px;top:125px" width="17" height="17" viewBox="0 0 17 17"><path d="M4 5.5 V1.5 H13 V5.5" fill="none" stroke="#1690d2" stroke-width="1.4"/><rect x="1" y="5.5" width="15" height="7" rx="1.5" fill="none" stroke="#1690d2" stroke-width="1.4"/><rect x="4" y="10" width="9" height="6" fill="#f4f6fa" stroke="#1690d2" stroke-width="1.4"/><circle cx="13" cy="8" r="0.7" fill="#1690d2"/></svg>
<!-- pdf viewport -->
<div class="a" style="left:964px;top:159px;width:956px;height:902px;background:#fafafa;overflow:hidden">
  <div class="a" style="left:0;top:0;width:8px;height:902px;background:linear-gradient(90deg,#e9ebef,#dfe0e3)"></div>
  <div class="a" style="left:8px;top:0;width:933px;height:877px;background:#fff"></div>
  <div class="a" style="left:8px;top:877px;width:933px;height:12px;background:linear-gradient(180deg,#cbcdd2,#e6e7ea)"></div>
  <div class="a" style="left:0;top:0;width:956px;height:9px;background:linear-gradient(180deg,rgba(0,0,0,0.08),rgba(0,0,0,0))"></div>
</div>
<!-- DRAW_START -->
<svg class="a" style="left:972px;top:159px" width="933" height="877" viewBox="972 159 933 877" font-family="Liberation Sans"><defs><pattern id="xh" width="8" height="8" patternUnits="userSpaceOnUse"><path d="M-1 -1 L9 9 M-5 3 L5 13 M3 -5 L13 5 M-1 9 L9 -1 M-5 5 L5 -5 M3 13 L13 3" stroke="#222" stroke-width="0.7"/></pattern><pattern id="dh" width="4" height="4" patternUnits="userSpaceOnUse"><path d="M0 4 L4 0" stroke="#111" stroke-width="0.6"/></pattern></defs><text transform="translate(1231.0,229.5) scale(0.78,1)" font-size="25" text-anchor="middle" fill="#111">PŮDORYS I.NP</text>
<text transform="translate(1229.0,248.5) scale(0.85,1)" font-size="14" text-anchor="middle" fill="#111">M 1:50</text>
<line x1="1372.0" y1="246.0" x2="1372.0" y2="279.0" stroke="#111" stroke-width="1.6"/>
<line x1="1372.0" y1="258.5" x2="1419.0" y2="258.5" stroke="#111" stroke-width="0.8"/>
<polygon points="1373.0,258.5 1385.0,255.5 1385.0,261.5" fill="#111" stroke="#111" stroke-width="0.5"/>
<text transform="translate(1402.0,254.0) scale(0.85,1)" font-size="24" text-anchor="middle" fill="#111">A</text>
<line x1="1372.0" y1="966.0" x2="1372.0" y2="1000.0" stroke="#111" stroke-width="1.6"/>
<line x1="1372.0" y1="986.5" x2="1419.0" y2="986.5" stroke="#111" stroke-width="0.8"/>
<polygon points="1373.0,986.5 1385.0,983.5 1385.0,989.5" fill="#111" stroke="#111" stroke-width="0.5"/>
<text transform="translate(1401.0,1008.0) scale(0.85,1)" font-size="24" text-anchor="middle" fill="#111">A</text>
<line x1="1164.5" y1="292.0" x2="1905.0" y2="292.0" stroke="#111" stroke-width="0.8"/>
<line x1="1161.0" y1="295.5" x2="1168.0" y2="288.5" stroke="#111" stroke-width="1.0"/>
<line x1="1164.5" y1="288.0" x2="1164.5" y2="333.0" stroke="#111" stroke-width="0.8"/>
<line x1="1349.9" y1="295.5" x2="1356.9" y2="288.5" stroke="#111" stroke-width="1.0"/>
<line x1="1353.4" y1="288.0" x2="1353.4" y2="333.0" stroke="#111" stroke-width="0.8"/>
<line x1="1476.7" y1="295.5" x2="1483.7" y2="288.5" stroke="#111" stroke-width="1.0"/>
<line x1="1480.2" y1="288.0" x2="1480.2" y2="333.0" stroke="#111" stroke-width="0.8"/>
<line x1="1664.0" y1="295.5" x2="1671.0" y2="288.5" stroke="#111" stroke-width="1.0"/>
<line x1="1667.5" y1="288.0" x2="1667.5" y2="333.0" stroke="#111" stroke-width="0.8"/>
<line x1="1730.1" y1="295.5" x2="1737.1" y2="288.5" stroke="#111" stroke-width="1.0"/>
<line x1="1733.6" y1="288.0" x2="1733.6" y2="333.0" stroke="#111" stroke-width="0.8"/>
<text transform="translate(1259.0,291.0) scale(0.82,1)" font-size="10" text-anchor="middle" fill="#111">3150</text>
<text transform="translate(1416.5,291.0) scale(0.82,1)" font-size="10" text-anchor="middle" fill="#111">2100</text>
<text transform="translate(1415.0,302.0) scale(0.82,1)" font-size="10" text-anchor="middle" fill="#111">1000(1210)</text>
<text transform="translate(1574.0,291.0) scale(0.82,1)" font-size="10" text-anchor="middle" fill="#111">3125</text>
<text transform="translate(1701.0,291.0) scale(0.82,1)" font-size="10" text-anchor="middle" fill="#111">1100</text>
<text transform="translate(1701.0,302.0) scale(0.82,1)" font-size="10" text-anchor="middle" fill="#111">2210</text>
<text transform="translate(1828.0,291.0) scale(0.82,1)" font-size="10" text-anchor="middle" fill="#111">3125</text>
<line x1="1733.6" y1="309.0" x2="1806.0" y2="309.0" stroke="#111" stroke-width="0.8"/>
<line x1="1730.1" y1="312.5" x2="1737.1" y2="305.5" stroke="#111" stroke-width="1.0"/>
<line x1="1733.6" y1="305.0" x2="1733.6" y2="332.0" stroke="#111" stroke-width="0.8"/>
<line x1="1765.5" y1="312.5" x2="1772.5" y2="305.5" stroke="#111" stroke-width="1.0"/>
<line x1="1769.0" y1="305.0" x2="1769.0" y2="332.0" stroke="#111" stroke-width="0.8"/>
<line x1="1775.5" y1="312.5" x2="1782.5" y2="305.5" stroke="#111" stroke-width="1.0"/>
<line x1="1779.0" y1="305.0" x2="1779.0" y2="332.0" stroke="#111" stroke-width="0.8"/>
<text transform="translate(1752.0,307.5) scale(0.82,1)" font-size="10" text-anchor="middle" fill="#111">600</text>
<text transform="translate(1791.0,307.5) scale(0.82,1)" font-size="10" text-anchor="middle" fill="#111">150</text>
<text transform="translate(1793.0,317.0) scale(0.82,1)" font-size="10" text-anchor="middle" fill="#111">150</text>
<text transform="translate(1793.0,326.0) scale(0.82,1)" font-size="10" text-anchor="middle" fill="#111">(2585)</text>
<circle cx="1417.0" cy="322.0" r="12" fill="#fff" stroke="#111" stroke-width="0.9"/>
<text transform="translate(1417.0,327.8) scale(0.8,1)" font-size="16" text-anchor="middle" fill="#111">3</text>
<line x1="1417.0" y1="334.0" x2="1417.0" y2="358.0" stroke="#111" stroke-width="0.8"/>
<text transform="translate(1418.0,344.5) scale(0.82,1)" font-size="9.5" text-anchor="middle" fill="#111">SENDWIX  8DF-250</text>
<circle cx="1752.5" cy="324.0" r="12" fill="#fff" stroke="#111" stroke-width="0.9"/>
<text transform="translate(1752.5,329.4) scale(0.8,1)" font-size="15" text-anchor="middle" fill="#111">M1</text>
<line x1="1760.0" y1="333.0" x2="1774.0" y2="348.0" stroke="#111" stroke-width="0.8"/>
<text transform="translate(1597.0,334.0) scale(0.82,1)" font-size="9.5" text-anchor="middle" fill="#111">SENDWIX  P02420</text>
<line x1="1565.0" y1="336.0" x2="1629.0" y2="336.0" stroke="#111" stroke-width="0.8"/>
<line x1="1565.0" y1="336.0" x2="1553.0" y2="366.0" stroke="#111" stroke-width="0.8"/>
<circle cx="1553.5" cy="365.5" r="1.3" fill="#111"/>
<text transform="translate(1702.0,345.0) scale(0.82,1)" font-size="9.5" text-anchor="middle" fill="#111">SENDWIX  8DF-150</text>
<line x1="1113.0" y1="345.0" x2="1113.0" y2="883.0" stroke="#111" stroke-width="0.8"/>
<line x1="1109.5" y1="350.2" x2="1116.5" y2="343.2" stroke="#111" stroke-width="1.0"/>
<line x1="1108.0" y1="346.7" x2="1150.0" y2="346.7" stroke="#111" stroke-width="0.8"/>
<line x1="1109.5" y1="385.8" x2="1116.5" y2="378.8" stroke="#111" stroke-width="1.0"/>
<line x1="1108.0" y1="382.3" x2="1150.0" y2="382.3" stroke="#111" stroke-width="0.8"/>
<line x1="1109.5" y1="434.2" x2="1116.5" y2="427.2" stroke="#111" stroke-width="1.0"/>
<line x1="1108.0" y1="430.7" x2="1150.0" y2="430.7" stroke="#111" stroke-width="0.8"/>
<line x1="1109.5" y1="502.2" x2="1116.5" y2="495.2" stroke="#111" stroke-width="1.0"/>
<line x1="1108.0" y1="498.7" x2="1150.0" y2="498.7" stroke="#111" stroke-width="0.8"/>
<line x1="1109.5" y1="550.6" x2="1116.5" y2="543.6" stroke="#111" stroke-width="1.0"/>
<line x1="1108.0" y1="547.1" x2="1150.0" y2="547.1" stroke="#111" stroke-width="0.8"/>
<line x1="1109.5" y1="886.0" x2="1116.5" y2="879.0" stroke="#111" stroke-width="1.0"/>
<line x1="1108.0" y1="882.5" x2="1150.0" y2="882.5" stroke="#111" stroke-width="0.8"/>
<line x1="1116.7" y1="382.3" x2="1116.7" y2="430.7" stroke="#111" stroke-width="0.8"/>
<line x1="1116.7" y1="498.7" x2="1116.7" y2="547.1" stroke="#111" stroke-width="0.8"/>
<text transform="translate(1110.5,364.5) rotate(-90) scale(0.82,1)" font-size="10" text-anchor="middle" fill="#111">575</text>
<text transform="translate(1110.5,406.5) rotate(-90) scale(0.82,1)" font-size="10" text-anchor="middle" fill="#111">815</text>
<text transform="translate(1122.5,406.5) rotate(-90) scale(0.82,1)" font-size="10" text-anchor="middle" fill="#111">875(1335)</text>
<text transform="translate(1110.5,464.5) rotate(-90) scale(0.82,1)" font-size="10" text-anchor="middle" fill="#111">1125</text>
<text transform="translate(1110.5,522.0) rotate(-90) scale(0.82,1)" font-size="10" text-anchor="middle" fill="#111">815</text>
<text transform="translate(1122.5,522.0) rotate(-90) scale(0.82,1)" font-size="10" text-anchor="middle" fill="#111">875(1335)</text>
<text transform="translate(1110.5,715.0) rotate(-90) scale(0.82,1)" font-size="10" text-anchor="middle" fill="#111">5570</text>
<circle cx="1139.0" cy="406.0" r="12" fill="#fff" stroke="#111" stroke-width="0.9"/>
<text transform="translate(1139.0,411.8) scale(0.8,1)" font-size="16" text-anchor="middle" fill="#111">1</text>
<line x1="1151.0" y1="406.0" x2="1176.0" y2="406.0" stroke="#111" stroke-width="0.8"/>
<circle cx="1139.0" cy="523.0" r="12" fill="#fff" stroke="#111" stroke-width="0.9"/>
<text transform="translate(1139.0,528.8) scale(0.8,1)" font-size="16" text-anchor="middle" fill="#111">1</text>
<line x1="1151.0" y1="523.0" x2="1176.0" y2="523.0" stroke="#111" stroke-width="0.8"/>
<text transform="translate(1162.0,405.0) rotate(-90) scale(0.82,1)" font-size="9.5" text-anchor="middle" fill="#111">SENDWIX  8DF-125</text>
<text transform="translate(1162.0,522.0) rotate(-90) scale(0.82,1)" font-size="9.5" text-anchor="middle" fill="#111">SENDWIX  8DF-125</text>
<polygon points="1164.5,347.5 1353.4,347.5 1353.4,374.7 1191.8,374.7 1191.8,381.0 1164.5,381.0" fill="none" stroke="#111" stroke-width="2.2"/>
<path d="M1184.0 349.0 V354.5 A3.5 3.5 0 0 0 1191.0 354.5 V349.0 M1193.2 349.0 V354.5 A3.5 3.5 0 0 0 1200.2 354.5 V349.0 M1202.4 349.0 V354.5 A3.5 3.5 0 0 0 1209.4 354.5 V349.0 M1211.6 349.0 V354.5 A3.5 3.5 0 0 0 1218.6 354.5 V349.0 M1220.8 349.0 V354.5 A3.5 3.5 0 0 0 1227.8 354.5 V349.0 M1230.0 349.0 V354.5 A3.5 3.5 0 0 0 1237.0 354.5 V349.0 M1239.2 349.0 V354.5 A3.5 3.5 0 0 0 1246.2 354.5 V349.0 M1248.4 349.0 V354.5 A3.5 3.5 0 0 0 1255.4 354.5 V349.0 M1257.6 349.0 V354.5 A3.5 3.5 0 0 0 1264.6 354.5 V349.0 M1266.8 349.0 V354.5 A3.5 3.5 0 0 0 1273.8 354.5 V349.0 M1276.0 349.0 V354.5 A3.5 3.5 0 0 0 1283.0 354.5 V349.0 M1285.2 349.0 V354.5 A3.5 3.5 0 0 0 1292.2 354.5 V349.0 M1294.4 349.0 V354.5 A3.5 3.5 0 0 0 1301.4 354.5 V349.0 M1303.6 349.0 V354.5 A3.5 3.5 0 0 0 1310.6 354.5 V349.0 M1312.8 349.0 V354.5 A3.5 3.5 0 0 0 1319.8 354.5 V349.0 M1322.0 349.0 V354.5 A3.5 3.5 0 0 0 1329.0 354.5 V349.0 M1331.2 349.0 V354.5 A3.5 3.5 0 0 0 1338.2 354.5 V349.0 M1340.4 349.0 V354.5 A3.5 3.5 0 0 0 1347.4 354.5 V349.0" fill="none" stroke="#111" stroke-width="0.7"/>
<line x1="1178.0" y1="360.0" x2="1353.4" y2="360.0" stroke="#111" stroke-width="0.7"/>
<line x1="1178.0" y1="360.0" x2="1178.0" y2="381.0" stroke="#111" stroke-width="0.7"/>
<path d="M1176.0 358.0 H1169.5 A3.5 3.5 0 0 0 1169.5 365.0 H1176.0 M1176.0 367.2 H1169.5 A3.5 3.5 0 0 0 1169.5 374.2 H1176.0" fill="none" stroke="#111" stroke-width="0.7"/>
<line x1="1353.4" y1="347.5" x2="1480.2" y2="347.5" stroke="#111" stroke-width="0.8"/>
<line x1="1353.4" y1="354.3" x2="1480.2" y2="354.3" stroke="#111" stroke-width="0.8"/>
<line x1="1353.4" y1="360.0" x2="1480.2" y2="360.0" stroke="#111" stroke-width="0.8"/>
<line x1="1353.4" y1="374.7" x2="1480.2" y2="374.7" stroke="#111" stroke-width="0.8"/>
<rect x="1480.2" y="347.5" width="187.3" height="27.5" fill="none" stroke="#111" stroke-width="2.2"/>
<path d="M1483.0 349.0 V354.5 A3.5 3.5 0 0 0 1490.0 354.5 V349.0 M1492.2 349.0 V354.5 A3.5 3.5 0 0 0 1499.2 354.5 V349.0 M1501.4 349.0 V354.5 A3.5 3.5 0 0 0 1508.4 354.5 V349.0 M1510.6 349.0 V354.5 A3.5 3.5 0 0 0 1517.6 354.5 V349.0 M1519.8 349.0 V354.5 A3.5 3.5 0 0 0 1526.8 354.5 V349.0 M1529.0 349.0 V354.5 A3.5 3.5 0 0 0 1536.0 354.5 V349.0 M1538.2 349.0 V354.5 A3.5 3.5 0 0 0 1545.2 354.5 V349.0 M1547.4 349.0 V354.5 A3.5 3.5 0 0 0 1554.4 354.5 V349.0 M1556.6 349.0 V354.5 A3.5 3.5 0 0 0 1563.6 354.5 V349.0 M1565.8 349.0 V354.5 A3.5 3.5 0 0 0 1572.8 354.5 V349.0 M1575.0 349.0 V354.5 A3.5 3.5 0 0 0 1582.0 354.5 V349.0 M1584.2 349.0 V354.5 A3.5 3.5 0 0 0 1591.2 354.5 V349.0 M1593.4 349.0 V354.5 A3.5 3.5 0 0 0 1600.4 354.5 V349.0 M1602.6 349.0 V354.5 A3.5 3.5 0 0 0 1609.6 354.5 V349.0 M1611.8 349.0 V354.5 A3.5 3.5 0 0 0 1618.8 354.5 V349.0 M1621.0 349.0 V354.5 A3.5 3.5 0 0 0 1628.0 354.5 V349.0 M1630.2 349.0 V354.5 A3.5 3.5 0 0 0 1637.2 354.5 V349.0 M1639.4 349.0 V354.5 A3.5 3.5 0 0 0 1646.4 354.5 V349.0 M1648.6 349.0 V354.5 A3.5 3.5 0 0 0 1655.6 354.5 V349.0 M1657.8 349.0 V354.5 A3.5 3.5 0 0 0 1664.8 354.5 V349.0" fill="none" stroke="#111" stroke-width="0.7"/>
<line x1="1480.2" y1="360.0" x2="1667.5" y2="360.0" stroke="#111" stroke-width="0.7"/>
<line x1="1667.5" y1="354.3" x2="1733.6" y2="354.3" stroke="#111" stroke-width="0.8"/>
<line x1="1667.5" y1="360.0" x2="1733.6" y2="360.0" stroke="#111" stroke-width="0.8"/>
<line x1="1667.5" y1="374.7" x2="1733.6" y2="374.7" stroke="#111" stroke-width="0.8" stroke-dasharray="6 2 1 2"/>
<rect x="1733.6" y="347.5" width="185.0" height="27.5" fill="none" stroke="#111" stroke-width="2.2"/>
<path d="M1737.0 349.0 V354.5 A3.5 3.5 0 0 0 1744.0 354.5 V349.0 M1746.2 349.0 V354.5 A3.5 3.5 0 0 0 1753.2 354.5 V349.0 M1755.4 349.0 V354.5 A3.5 3.5 0 0 0 1762.4 354.5 V349.0 M1764.6 349.0 V354.5 A3.5 3.5 0 0 0 1771.6 354.5 V349.0 M1773.8 349.0 V354.5 A3.5 3.5 0 0 0 1780.8 354.5 V349.0 M1783.0 349.0 V354.5 A3.5 3.5 0 0 0 1790.0 354.5 V349.0 M1792.2 349.0 V354.5 A3.5 3.5 0 0 0 1799.2 354.5 V349.0 M1801.4 349.0 V354.5 A3.5 3.5 0 0 0 1808.4 354.5 V349.0 M1810.6 349.0 V354.5 A3.5 3.5 0 0 0 1817.6 354.5 V349.0 M1819.8 349.0 V354.5 A3.5 3.5 0 0 0 1826.8 354.5 V349.0 M1829.0 349.0 V354.5 A3.5 3.5 0 0 0 1836.0 354.5 V349.0 M1838.2 349.0 V354.5 A3.5 3.5 0 0 0 1845.2 354.5 V349.0 M1847.4 349.0 V354.5 A3.5 3.5 0 0 0 1854.4 354.5 V349.0 M1856.6 349.0 V354.5 A3.5 3.5 0 0 0 1863.6 354.5 V349.0 M1865.8 349.0 V354.5 A3.5 3.5 0 0 0 1872.8 354.5 V349.0 M1875.0 349.0 V354.5 A3.5 3.5 0 0 0 1882.0 354.5 V349.0 M1884.2 349.0 V354.5 A3.5 3.5 0 0 0 1891.2 354.5 V349.0 M1893.4 349.0 V354.5 A3.5 3.5 0 0 0 1900.4 354.5 V349.0" fill="none" stroke="#111" stroke-width="0.7"/>
<line x1="1733.6" y1="360.0" x2="1905.0" y2="360.0" stroke="#111" stroke-width="0.7"/>
<line x1="1164.5" y1="381.0" x2="1164.5" y2="431.0" stroke="#111" stroke-width="0.8"/>
<line x1="1178.0" y1="381.0" x2="1178.0" y2="431.0" stroke="#111" stroke-width="0.8"/>
<line x1="1191.8" y1="381.0" x2="1191.8" y2="431.0" stroke="#111" stroke-width="0.8"/>
<rect x="1164.5" y="430.7" width="27.3" height="68.0" fill="none" stroke="#111" stroke-width="2.2"/>
<path d="M1176.0 433.0 H1169.5 A3.5 3.5 0 0 0 1169.5 440.0 H1176.0 M1176.0 442.2 H1169.5 A3.5 3.5 0 0 0 1169.5 449.2 H1176.0 M1176.0 451.4 H1169.5 A3.5 3.5 0 0 0 1169.5 458.4 H1176.0 M1176.0 460.6 H1169.5 A3.5 3.5 0 0 0 1169.5 467.6 H1176.0 M1176.0 469.8 H1169.5 A3.5 3.5 0 0 0 1169.5 476.8 H1176.0 M1176.0 479.0 H1169.5 A3.5 3.5 0 0 0 1169.5 486.0 H1176.0 M1176.0 488.2 H1169.5 A3.5 3.5 0 0 0 1169.5 495.2 H1176.0" fill="none" stroke="#111" stroke-width="0.7"/>
<line x1="1178.0" y1="431.0" x2="1178.0" y2="499.0" stroke="#111" stroke-width="0.7"/>
<line x1="1164.5" y1="499.0" x2="1164.5" y2="547.0" stroke="#111" stroke-width="0.8"/>
<line x1="1178.0" y1="499.0" x2="1178.0" y2="547.0" stroke="#111" stroke-width="0.8"/>
<line x1="1191.8" y1="499.0" x2="1191.8" y2="547.0" stroke="#111" stroke-width="0.8"/>
<polyline points="1164.5,547.1 1164.5,882.3 1326.7,882.3 1326.7,855.1 1191.7,855.1 1191.7,547.1" fill="none" stroke="#111" stroke-width="2.2"/>
<path d="M1176.0 550.0 H1169.5 A3.5 3.5 0 0 0 1169.5 557.0 H1176.0 M1176.0 559.2 H1169.5 A3.5 3.5 0 0 0 1169.5 566.2 H1176.0 M1176.0 568.4 H1169.5 A3.5 3.5 0 0 0 1169.5 575.4 H1176.0 M1176.0 577.6 H1169.5 A3.5 3.5 0 0 0 1169.5 584.6 H1176.0 M1176.0 586.8 H1169.5 A3.5 3.5 0 0 0 1169.5 593.8 H1176.0 M1176.0 596.0 H1169.5 A3.5 3.5 0 0 0 1169.5 603.0 H1176.0 M1176.0 605.2 H1169.5 A3.5 3.5 0 0 0 1169.5 612.2 H1176.0 M1176.0 614.4 H1169.5 A3.5 3.5 0 0 0 1169.5 621.4 H1176.0 M1176.0 623.6 H1169.5 A3.5 3.5 0 0 0 1169.5 630.6 H1176.0 M1176.0 632.8 H1169.5 A3.5 3.5 0 0 0 1169.5 639.8 H1176.0 M1176.0 642.0 H1169.5 A3.5 3.5 0 0 0 1169.5 649.0 H1176.0 M1176.0 651.2 H1169.5 A3.5 3.5 0 0 0 1169.5 658.2 H1176.0 M1176.0 660.4 H1169.5 A3.5 3.5 0 0 0 1169.5 667.4 H1176.0 M1176.0 669.6 H1169.5 A3.5 3.5 0 0 0 1169.5 676.6 H1176.0 M1176.0 678.8 H1169.5 A3.5 3.5 0 0 0 1169.5 685.8 H1176.0 M1176.0 688.0 H1169.5 A3.5 3.5 0 0 0 1169.5 695.0 H1176.0 M1176.0 697.2 H1169.5 A3.5 3.5 0 0 0 1169.5 704.2 H1176.0 M1176.0 706.4 H1169.5 A3.5 3.5 0 0 0 1169.5 713.4 H1176.0 M1176.0 715.6 H1169.5 A3.5 3.5 0 0 0 1169.5 722.6 H1176.0 M1176.0 724.8 H1169.5 A3.5 3.5 0 0 0 1169.5 731.8 H1176.0 M1176.0 734.0 H1169.5 A3.5 3.5 0 0 0 1169.5 741.0 H1176.0 M1176.0 743.2 H1169.5 A3.5 3.5 0 0 0 1169.5 750.2 H1176.0 M1176.0 752.4 H1169.5 A3.5 3.5 0 0 0 1169.5 759.4 H1176.0 M1176.0 761.6 H1169.5 A3.5 3.5 0 0 0 1169.5 768.6 H1176.0 M1176.0 770.8 H1169.5 A3.5 3.5 0 0 0 1169.5 777.8 H1176.0 M1176.0 780.0 H1169.5 A3.5 3.5 0 0 0 1169.5 787.0 H1176.0 M1176.0 789.2 H1169.5 A3.5 3.5 0 0 0 1169.5 796.2 H1176.0 M1176.0 798.4 H1169.5 A3.5 3.5 0 0 0 1169.5 805.4 H1176.0 M1176.0 807.6 H1169.5 A3.5 3.5 0 0 0 1169.5 814.6 H1176.0 M1176.0 816.8 H1169.5 A3.5 3.5 0 0 0 1169.5 823.8 H1176.0 M1176.0 826.0 H1169.5 A3.5 3.5 0 0 0 1169.5 833.0 H1176.0 M1176.0 835.2 H1169.5 A3.5 3.5 0 0 0 1169.5 842.2 H1176.0 M1176.0 844.4 H1169.5 A3.5 3.5 0 0 0 1169.5 851.4 H1176.0" fill="none" stroke="#111" stroke-width="0.7"/>
<line x1="1178.0" y1="549.0" x2="1178.0" y2="869.0" stroke="#111" stroke-width="0.7"/>
<path d="M1180.0 881.0 V873.5 A3.5 3.5 0 0 1 1187.0 873.5 V881.0 M1189.2 881.0 V873.5 A3.5 3.5 0 0 1 1196.2 873.5 V881.0 M1198.4 881.0 V873.5 A3.5 3.5 0 0 1 1205.4 873.5 V881.0 M1207.6 881.0 V873.5 A3.5 3.5 0 0 1 1214.6 873.5 V881.0 M1216.8 881.0 V873.5 A3.5 3.5 0 0 1 1223.8 873.5 V881.0 M1226.0 881.0 V873.5 A3.5 3.5 0 0 1 1233.0 873.5 V881.0 M1235.2 881.0 V873.5 A3.5 3.5 0 0 1 1242.2 873.5 V881.0 M1244.4 881.0 V873.5 A3.5 3.5 0 0 1 1251.4 873.5 V881.0 M1253.6 881.0 V873.5 A3.5 3.5 0 0 1 1260.6 873.5 V881.0 M1262.8 881.0 V873.5 A3.5 3.5 0 0 1 1269.8 873.5 V881.0 M1272.0 881.0 V873.5 A3.5 3.5 0 0 1 1279.0 873.5 V881.0 M1281.2 881.0 V873.5 A3.5 3.5 0 0 1 1288.2 873.5 V881.0 M1290.4 881.0 V873.5 A3.5 3.5 0 0 1 1297.4 873.5 V881.0 M1299.6 881.0 V873.5 A3.5 3.5 0 0 1 1306.6 873.5 V881.0 M1308.8 881.0 V873.5 A3.5 3.5 0 0 1 1315.8 873.5 V881.0" fill="none" stroke="#111" stroke-width="0.7"/>
<line x1="1178.0" y1="868.8" x2="1326.7" y2="868.8" stroke="#111" stroke-width="0.7"/>
<line x1="1326.7" y1="855.1" x2="1741.0" y2="855.1" stroke="#111" stroke-width="0.8" stroke-dasharray="7 2 1.5 2"/>
<line x1="1326.7" y1="862.4" x2="1741.0" y2="862.4" stroke="#111" stroke-width="0.8" stroke-dasharray="7 2 1.5 2"/>
<line x1="1362.0" y1="866.4" x2="1741.0" y2="866.4" stroke="#111" stroke-width="0.6"/>
<line x1="1326.7" y1="869.5" x2="1741.0" y2="869.5" stroke="#111" stroke-width="1.1"/>
<line x1="1326.7" y1="874.7" x2="1741.0" y2="874.7" stroke="#777" stroke-width="1.2"/>
<line x1="1326.7" y1="882.4" x2="1741.0" y2="882.4" stroke="#666" stroke-width="1.0"/>
<rect x="1326.0" y="868.0" width="6.0" height="7.0" fill="#fff"/>
<rect x="1326.5" y="868.3" width="5.0" height="6.0" fill="none" stroke="#111" stroke-width="1.3"/>
<rect x="1391.0" y="869.0" width="5.5" height="6.0" fill="none" stroke="#111" stroke-width="1.4"/>
<rect x="1671.0" y="869.0" width="5.5" height="6.0" fill="none" stroke="#111" stroke-width="1.4"/>
<rect x="1741.1" y="855.1" width="97.9" height="27.2" fill="none" stroke="#111" stroke-width="2.2"/>
<path d="M1744.0 881.0 V873.5 A3.5 3.5 0 0 1 1751.0 873.5 V881.0 M1753.2 881.0 V873.5 A3.5 3.5 0 0 1 1760.2 873.5 V881.0 M1762.4 881.0 V873.5 A3.5 3.5 0 0 1 1769.4 873.5 V881.0 M1771.6 881.0 V873.5 A3.5 3.5 0 0 1 1778.6 873.5 V881.0 M1780.8 881.0 V873.5 A3.5 3.5 0 0 1 1787.8 873.5 V881.0 M1790.0 881.0 V873.5 A3.5 3.5 0 0 1 1797.0 873.5 V881.0 M1799.2 881.0 V873.5 A3.5 3.5 0 0 1 1806.2 873.5 V881.0 M1808.4 881.0 V873.5 A3.5 3.5 0 0 1 1815.4 873.5 V881.0 M1817.6 881.0 V873.5 A3.5 3.5 0 0 1 1824.6 873.5 V881.0 M1826.8 881.0 V873.5 A3.5 3.5 0 0 1 1833.8 873.5 V881.0" fill="none" stroke="#111" stroke-width="0.7"/>
<line x1="1741.0" y1="868.0" x2="1839.0" y2="868.0" stroke="#111" stroke-width="0.7"/>
<rect x="1736.0" y="868.0" width="5.0" height="6.0" fill="none" stroke="#111" stroke-width="1.3"/>
<rect x="1839.0" y="868.0" width="5.0" height="6.0" fill="none" stroke="#111" stroke-width="1.3"/>
<line x1="1844.0" y1="869.5" x2="1905.0" y2="869.5" stroke="#111" stroke-width="1.1"/>
<line x1="1844.0" y1="874.7" x2="1905.0" y2="874.7" stroke="#777" stroke-width="1.2"/>
<line x1="1844.0" y1="882.4" x2="1905.0" y2="882.4" stroke="#666" stroke-width="1.0"/>
<line x1="1844.0" y1="855.1" x2="1905.0" y2="855.1" stroke="#111" stroke-width="0.8" stroke-dasharray="7 2 1.5 2"/>
<line x1="1844.0" y1="862.4" x2="1905.0" y2="862.4" stroke="#111" stroke-width="0.8" stroke-dasharray="7 2 1.5 2"/>
<line x1="1191.8" y1="374.7" x2="1326.7" y2="374.7" stroke="#111" stroke-width="2.2"/>
<line x1="1199.0" y1="374.7" x2="1199.0" y2="434.0" stroke="#111" stroke-width="0.7"/>
<line x1="1320.0" y1="380.0" x2="1320.0" y2="434.0" stroke="#111" stroke-width="0.7"/>
<rect x="1191.8" y="438.0" width="135.0" height="7.0" fill="url(#dh)" stroke="#111" stroke-width="0.8"/>
<line x1="1191.8" y1="434.5" x2="1326.7" y2="434.5" stroke="#111" stroke-width="2.0"/>
<line x1="1191.8" y1="445.0" x2="1326.7" y2="445.0" stroke="#111" stroke-width="2.0"/>
<rect x="1326.7" y="376.0" width="7.5" height="8.0" fill="url(#dh)" stroke="#111" stroke-width="0.8"/>
<rect x="1326.7" y="376.0" width="7.5" height="8.0" fill="none" stroke="#111" stroke-width="2.0"/>
<line x1="1326.7" y1="384.0" x2="1326.7" y2="426.0" stroke="#111" stroke-width="0.8"/>
<line x1="1334.2" y1="384.0" x2="1334.2" y2="426.0" stroke="#111" stroke-width="0.8"/>
<rect x="1326.7" y="426.0" width="7.5" height="128.0" fill="url(#dh)" stroke="#111" stroke-width="0.8"/>
<rect x="1326.7" y="426.0" width="7.5" height="20.0" fill="none" stroke="#111" stroke-width="2.0"/>
<rect x="1326.7" y="493.0" width="7.5" height="10.0" fill="none" stroke="#111" stroke-width="2.0"/>
<line x1="1333.5" y1="503.0" x2="1333.5" y2="555.0" stroke="#111" stroke-width="2.0"/>
<line x1="1192.0" y1="434.5" x2="1326.7" y2="376.0" stroke="#111" stroke-width="0.8"/>
<ellipse cx="1220" cy="404.5" rx="12" ry="9" fill="none" stroke="#111" stroke-width="0.8"/>
<circle cx="1215" cy="404.5" r="2.5" fill="none" stroke="#111" stroke-width="0.7"/>
<rect x="1201.0" y="389.0" width="7.0" height="31.0" fill="none" stroke="#111" stroke-width="0.7"/>
<circle cx="1240.7" cy="417.5" r="11" fill="#fff" stroke="#111" stroke-width="0.9"/>
<text transform="translate(1240.7,422.5) scale(0.8,1)" font-size="14" text-anchor="middle" fill="#111">QC</text>
<text transform="translate(1275.5,413.0) scale(0.8,1)" font-size="13" text-anchor="middle" font-weight="bold" fill="#111">WC</text>
<text transform="translate(1277.0,422.5) scale(0.82,1)" font-size="9.5" text-anchor="middle" fill="#111">KER.  DL.</text>
<text transform="translate(1276.0,434.0) scale(0.82,1)" font-size="10" text-anchor="middle" fill="#111">2,36  m²</text>
<text transform="translate(1269.5,384.0) scale(0.82,1)" font-size="9" text-anchor="middle" fill="#111">(1800)</text>
<text transform="translate(1251.0,396.0) rotate(-90) scale(0.82,1)" font-size="10" text-anchor="middle" fill="#111">1050</text>
<text transform="translate(1249.5,369.0) rotate(-90) scale(0.82,1)" font-size="10" text-anchor="middle" fill="#111">450</text>
<line x1="1255.0" y1="352.0" x2="1255.0" y2="434.0" stroke="#111" stroke-width="0.7"/>
<path d="M1284.5 386.0 A42 42 0 0 0 1326.7 427.0" fill="none" stroke="#111" stroke-width="0.8"/>
<line x1="1284.5" y1="386.0" x2="1326.7" y2="376.0" stroke="#111" stroke-width="0.7"/>
<text transform="translate(1306.0,406.0) scale(0.82,1)" font-size="10" text-anchor="middle" fill="#111">700</text>
<text transform="translate(1306.0,414.0) scale(0.82,1)" font-size="10" text-anchor="middle" fill="#111">2100</text>
<line x1="1281.0" y1="402.0" x2="1335.0" y2="402.0" stroke="#111" stroke-width="0.7"/>
<text transform="translate(1324.0,406.0) rotate(-90) scale(0.82,1)" font-size="9.5" text-anchor="middle" fill="#111">2DF-100</text>
<text transform="translate(1344.5,390.0) rotate(-90) scale(0.82,1)" font-size="10" text-anchor="middle" fill="#111">525</text>
<line x1="1340.0" y1="376.0" x2="1340.0" y2="405.0" stroke="#111" stroke-width="0.7"/>
<line x1="1334.0" y1="405.0" x2="1349.0" y2="405.0" stroke="#111" stroke-width="0.7"/>
<circle cx="1365.0" cy="405.3" r="12" fill="#fff" stroke="#111" stroke-width="0.9"/>
<line x1="1353.0" y1="405.3" x2="1377.0" y2="405.3" stroke="#111" stroke-width="0.7"/>
<text transform="translate(1365.0,403.8) scale(0.85,1)" font-size="10" text-anchor="middle" fill="#111">2</text>
<text transform="translate(1365.0,415.3) scale(0.85,1)" font-size="10" text-anchor="middle" fill="#111">L</text>
<circle cx="1356.0" cy="438.3" r="12" fill="#fff" stroke="#111" stroke-width="0.9"/>
<text transform="translate(1356.0,443.0) scale(0.8,1)" font-size="13" text-anchor="middle" fill="#111">DM</text>
<circle cx="1403.0" cy="438.3" r="12" fill="#fff" stroke="#111" stroke-width="0.9"/>
<text transform="translate(1403.0,443.0) scale(0.8,1)" font-size="13" text-anchor="middle" fill="#111">QA</text>
<line x1="1362.0" y1="448.0" x2="1414.0" y2="509.0" stroke="#111" stroke-width="0.7"/>
<line x1="1401.0" y1="450.0" x2="1396.0" y2="479.0" stroke="#111" stroke-width="0.7"/>
<line x1="1471.8" y1="374.7" x2="1471.8" y2="461.0" stroke="#111" stroke-width="0.7"/>
<text transform="translate(1470.5,428.0) rotate(-90) scale(0.82,1)" font-size="10" text-anchor="middle" fill="#111">1785</text>
<rect x="1197.0" y="450.5" width="40.5" height="99.0" fill="none" stroke="#111" stroke-width="0.8"/>
<rect x="1200" y="454" width="34.5" height="92" rx="9" fill="none" stroke="#111" stroke-width="0.7"/>
<line x1="1194.5" y1="448.0" x2="1324.0" y2="554.7" stroke="#111" stroke-width="0.7"/>
<circle cx="1224.9" cy="475.3" r="11" fill="#fff" stroke="#111" stroke-width="0.9"/>
<text transform="translate(1224.9,480.3) scale(0.8,1)" font-size="14" text-anchor="middle" fill="#111">QC</text>
<text transform="translate(1251.0,477.0) rotate(-90) scale(0.82,1)" font-size="10" text-anchor="middle" fill="#111">1845</text>
<text transform="translate(1251.5,453.0) rotate(-90) scale(0.82,1)" font-size="10" text-anchor="middle" fill="#111">115</text>
<line x1="1247.0" y1="445.0" x2="1247.0" y2="555.0" stroke="#111" stroke-width="0.7"/>
<line x1="1255.0" y1="445.0" x2="1255.0" y2="855.0" stroke="#111" stroke-width="0.6"/>
<text transform="translate(1270.5,453.0) scale(0.82,1)" font-size="9" text-anchor="middle" fill="#111">(2100)</text>
<text transform="translate(1277.5,460.5) rotate(-90) scale(0.82,1)" font-size="10" text-anchor="middle" fill="#111">460</text>
<path d="M1284.5 446.0 A40 40 0 0 0 1324.0 484.0" fill="none" stroke="#111" stroke-width="0.8"/>
<text transform="translate(1306.0,471.0) scale(0.82,1)" font-size="10" text-anchor="middle" fill="#111">700</text>
<text transform="translate(1306.0,479.0) scale(0.82,1)" font-size="10" text-anchor="middle" fill="#111">2100</text>
<line x1="1280.0" y1="466.0" x2="1340.0" y2="466.0" stroke="#111" stroke-width="0.7"/>
<text transform="translate(1324.0,473.0) rotate(-90) scale(0.82,1)" font-size="9.5" text-anchor="middle" fill="#111">2DF-100</text>
<circle cx="1349.0" cy="465.6" r="12" fill="#fff" stroke="#111" stroke-width="0.9"/>
<line x1="1337.0" y1="465.6" x2="1361.0" y2="465.6" stroke="#111" stroke-width="0.7"/>
<text transform="translate(1349.0,464.1) scale(0.85,1)" font-size="10" text-anchor="middle" fill="#111">2</text>
<text transform="translate(1349.0,475.6) scale(0.85,1)" font-size="10" text-anchor="middle" fill="#111">L</text>
<text transform="translate(1284.0,489.5) scale(0.78,1)" font-size="13" text-anchor="middle" font-weight="bold" fill="#111">KOUPELNA</text>
<text transform="translate(1292.5,499.5) scale(0.82,1)" font-size="9.5" text-anchor="middle" fill="#111">KER.  DLAŽBA</text>
<text transform="translate(1288.0,510.0) scale(0.82,1)" font-size="10" text-anchor="middle" fill="#111">4,15  m²</text>
<text transform="translate(1225.0,499.5) scale(0.82,1)" font-size="10" text-anchor="middle" fill="#111">2250</text>
<line x1="1192.0" y1="501.0" x2="1334.0" y2="501.0" stroke="#111" stroke-width="0.7"/>
<rect x="1251.6" y="517.8" width="66.0" height="37.0" fill="none" stroke="#111" stroke-width="0.7"/>
<ellipse cx="1284.7" cy="536.9" rx="16" ry="11" fill="none" stroke="#111" stroke-width="0.8"/>
<ellipse cx="1284.7" cy="536.9" rx="12.5" ry="8" fill="none" stroke="#111" stroke-width="0.6"/>
<line x1="1334.0" y1="482.0" x2="1414.0" y2="482.0" stroke="#111" stroke-width="0.7" stroke-dasharray="6 2 1.5 2"/>
<text transform="translate(1341.0,508.0) scale(0.82,1)" font-size="10" text-anchor="middle" fill="#111">115</text>
<text transform="translate(1367.5,500.0) scale(0.82,1)" font-size="10" text-anchor="middle" fill="#111">1350</text>
<line x1="1356.0" y1="501.0" x2="1414.0" y2="501.0" stroke="#111" stroke-width="0.7"/>
<text transform="translate(1353.0,524.0) rotate(-90) scale(0.82,1)" font-size="10" text-anchor="middle" fill="#111">1225</text>
<line x1="1357.0" y1="482.0" x2="1357.0" y2="546.0" stroke="#111" stroke-width="0.7"/>
<text transform="translate(1365.0,547.0) scale(0.82,1)" font-size="10" text-anchor="middle" fill="#111">810</text>
<line x1="1334.0" y1="548.0" x2="1386.0" y2="548.0" stroke="#111" stroke-width="0.7"/>
<line x1="1355.0" y1="506.4" x2="1386.5" y2="506.4" stroke="#111" stroke-width="2.2"/>
<line x1="1366.0" y1="510.0" x2="1366.0" y2="544.5" stroke="#111" stroke-width="0.8"/>
<polygon points="1366.0,509.0 1363.5,518.0 1368.5,518.0" fill="#111" stroke="#111" stroke-width="0.5"/>
<text transform="translate(1374.0,521.0) scale(0.82,1)" font-size="10" text-anchor="middle" fill="#111">18</text>
<text transform="translate(1403.0,524.0) scale(0.82,1)" font-size="10" text-anchor="middle" fill="#111">600</text>
<text transform="translate(1403.0,533.0) scale(0.82,1)" font-size="10" text-anchor="middle" fill="#111">2100</text>
<text transform="translate(1387.5,532.0) rotate(-90) scale(0.82,1)" font-size="10" text-anchor="middle" fill="#111">500</text>
<rect x="1378.0" y="521.0" width="10.0" height="24.0" fill="none" stroke="#111" stroke-width="0.7" stroke-dasharray="3 2"/>
<path d="M1378.0 520.0 A37 37 0 0 1 1414.0 500.0" fill="none" stroke="#111" stroke-width="0.8"/>
<rect x="1414.5" y="482.2" width="127.5" height="10.2" fill="url(#xh)" stroke="#111" stroke-width="0.8"/>
<rect x="1414.5" y="482.0" width="8.0" height="17.0" fill="none" stroke="#111" stroke-width="2.0"/>
<rect x="1414.5" y="543.0" width="8.0" height="12.0" fill="none" stroke="#111" stroke-width="2.0"/>
<line x1="1418.0" y1="499.0" x2="1418.0" y2="543.0" stroke="#111" stroke-width="0.7"/>
<line x1="1422.0" y1="499.0" x2="1422.0" y2="543.0" stroke="#111" stroke-width="0.7"/>
<line x1="1428.5" y1="492.4" x2="1428.5" y2="553.4" stroke="#111" stroke-width="0.7" stroke-dasharray="5 3"/>
<line x1="1444.4" y1="492.4" x2="1444.4" y2="553.4" stroke="#111" stroke-width="0.7" stroke-dasharray="5 3"/>
<line x1="1461.3" y1="492.4" x2="1461.3" y2="553.4" stroke="#111" stroke-width="0.7" stroke-dasharray="5 3"/>
<line x1="1477.3" y1="492.4" x2="1477.3" y2="553.4" stroke="#111" stroke-width="0.7" stroke-dasharray="5 3"/>
<line x1="1493.2" y1="492.4" x2="1493.2" y2="553.4" stroke="#111" stroke-width="0.7" stroke-dasharray="5 3"/>
<line x1="1510.0" y1="492.4" x2="1510.0" y2="553.4" stroke="#111" stroke-width="0.7" stroke-dasharray="5 3"/>
<line x1="1526.0" y1="492.4" x2="1526.0" y2="553.4" stroke="#111" stroke-width="0.7" stroke-dasharray="5 3"/>
<line x1="1542.0" y1="492.4" x2="1542.0" y2="553.4" stroke="#111" stroke-width="0.7" stroke-dasharray="5 3"/>
<line x1="1558.9" y1="492.4" x2="1558.9" y2="553.4" stroke="#111" stroke-width="0.7" stroke-dasharray="5 3"/>
<line x1="1334.0" y1="501.0" x2="1740.0" y2="501.0" stroke="#111" stroke-width="0.6"/>
<line x1="1375.0" y1="515.0" x2="1740.0" y2="515.0" stroke="#111" stroke-width="0.6"/>
<line x1="1334.0" y1="553.0" x2="1740.0" y2="553.0" stroke="#111" stroke-width="0.6" stroke-dasharray="6 2 1.5 2"/>
<line x1="1472.6" y1="461.8" x2="1472.6" y2="578.0" stroke="#111" stroke-width="0.6"/>
<text transform="translate(1481.0,473.0) rotate(-90) scale(0.82,1)" font-size="10" text-anchor="middle" fill="#111">175</text>
<line x1="1482.5" y1="465.3" x2="1489.5" y2="458.3" stroke="#111" stroke-width="1.0"/>
<text transform="translate(1437.0,500.0) scale(0.82,1)" font-size="9" text-anchor="middle" fill="#111">115</text>
<text transform="translate(1436.0,527.0) rotate(-90) scale(0.82,1)" font-size="9.5" text-anchor="middle" fill="#111">2DF-100</text>
<text transform="translate(1469.5,528.0) rotate(-90) scale(0.82,1)" font-size="10" text-anchor="middle" fill="#111">1050</text>
<text transform="translate(1503.5,523.5) scale(0.82,1)" font-size="10" text-anchor="middle" fill="#111">18x179x270</text>
<rect x="1516.0" y="497.0" width="22.0" height="8.0" fill="#fff"/>
<text transform="translate(1527.0,505.0) scale(0.82,1)" font-size="10" text-anchor="middle" fill="#111">3890</text>
<rect x="1542.0" y="481.0" width="129.8" height="11.4" fill="none" stroke="#111" stroke-width="0.8"/>
<line x1="1542.0" y1="481.0" x2="1581.4" y2="553.4" stroke="#111" stroke-width="0.8"/>
<line x1="1546.0" y1="481.0" x2="1585.0" y2="553.4" stroke="#111" stroke-width="0.8"/>
<line x1="1574.8" y1="492.4" x2="1574.8" y2="553.4" stroke="#111" stroke-width="0.7"/>
<line x1="1590.8" y1="492.4" x2="1590.8" y2="553.4" stroke="#111" stroke-width="0.7"/>
<line x1="1606.7" y1="492.4" x2="1606.7" y2="553.4" stroke="#111" stroke-width="0.7" stroke-dasharray="5 3"/>
<line x1="1623.6" y1="492.4" x2="1623.6" y2="553.4" stroke="#111" stroke-width="0.7"/>
<line x1="1639.6" y1="492.4" x2="1639.6" y2="553.4" stroke="#111" stroke-width="0.7"/>
<line x1="1655.5" y1="492.4" x2="1655.5" y2="553.4" stroke="#111" stroke-width="0.7"/>
<text transform="translate(1685.0,472.0) scale(0.82,1)" font-size="9.5" text-anchor="middle" fill="#111">ZDĚNÉ  ZÁBRADLÍ</text>
<line x1="1655.0" y1="473.5" x2="1715.0" y2="473.5" stroke="#111" stroke-width="0.7"/>
<text transform="translate(1686.0,481.0) scale(0.82,1)" font-size="9.5" text-anchor="middle" fill="#111">v.900</text>
<line x1="1655.0" y1="473.5" x2="1631.0" y2="488.0" stroke="#111" stroke-width="0.8"/>
<circle cx="1631" cy="488" r="1.3" fill="#111"/>
<line x1="1500.0" y1="461.8" x2="1740.5" y2="461.8" stroke="#111" stroke-width="0.7"/>
<text transform="translate(1614.0,459.5) scale(0.82,1)" font-size="10" text-anchor="middle" fill="#111">4245</text>
<line x1="1352.0" y1="461.8" x2="1500.0" y2="461.8" stroke="#111" stroke-width="0.7"/>
<text transform="translate(1456.6,459.5) scale(0.82,1)" font-size="10" text-anchor="middle" fill="#111">2540</text>
<text transform="translate(1706.0,499.5) scale(0.82,1)" font-size="10" text-anchor="middle" fill="#111">1160</text>
<line x1="1673.0" y1="501.3" x2="1740.5" y2="501.3" stroke="#111" stroke-width="0.7"/>
<line x1="1669.5" y1="504.8" x2="1676.5" y2="497.8" stroke="#111" stroke-width="1.0"/>
<line x1="1737.0" y1="504.8" x2="1744.0" y2="497.8" stroke="#111" stroke-width="1.0"/>
<text transform="translate(1666.5,511.0) scale(0.82,1)" font-size="10" text-anchor="middle" fill="#111">270</text>
<circle cx="1655.8" cy="514" r="3.2" fill="none" stroke="#111" stroke-width="0.6"/>
<text transform="translate(1651.0,528.0) scale(0.82,1)" font-size="8" text-anchor="middle" fill="#111">1</text>
<line x1="1678.0" y1="506.4" x2="1711.0" y2="506.4" stroke="#111" stroke-width="2.2"/>
<line x1="1698.5" y1="510.0" x2="1698.5" y2="544.5" stroke="#111" stroke-width="0.8"/>
<polygon points="1698.5,509.0 1696.0,518.0 1701.0,518.0" fill="#111" stroke="#111" stroke-width="0.5"/>
<rect x="1191.8" y="554.7" width="166.7" height="15.3" fill="url(#xh)" stroke="#111" stroke-width="0.8"/>
<line x1="1191.8" y1="554.7" x2="1358.5" y2="554.7" stroke="#111" stroke-width="2.0"/>
<line x1="1191.8" y1="570.0" x2="1358.5" y2="570.0" stroke="#111" stroke-width="2.0"/>
<line x1="1358.5" y1="554.7" x2="1358.5" y2="570.0" stroke="#111" stroke-width="2.4"/>
<rect x="1406.9" y="554.7" width="268.7" height="15.3" fill="url(#xh)" stroke="#111" stroke-width="0.8"/>
<line x1="1406.9" y1="554.7" x2="1675.6" y2="554.7" stroke="#111" stroke-width="2.0"/>
<line x1="1406.9" y1="570.0" x2="1675.6" y2="570.0" stroke="#111" stroke-width="2.0"/>
<line x1="1406.9" y1="554.7" x2="1406.9" y2="570.0" stroke="#111" stroke-width="2.4"/>
<line x1="1675.6" y1="554.7" x2="1675.6" y2="570.0" stroke="#111" stroke-width="2.4"/>
<rect x="1730.5" y="554.2" width="11.0" height="16.5" fill="url(#xh)" stroke="#111" stroke-width="0.8"/>
<rect x="1730.5" y="554.2" width="11.0" height="16.5" fill="none" stroke="#111" stroke-width="2.2"/>
<line x1="1358.5" y1="570.0" x2="1358.5" y2="617.0" stroke="#111" stroke-width="0.8"/>
<path d="M1358.5 617.0 A48 48 0 0 0 1406.9 570.0" fill="none" stroke="#111" stroke-width="0.8"/>
<text transform="translate(1382.5,579.5) scale(0.82,1)" font-size="9.5" text-anchor="middle" fill="#111">8DF-125</text>
<text transform="translate(1380.0,592.0) rotate(-90) scale(0.82,1)" font-size="10" text-anchor="middle" fill="#111">800</text>
<text transform="translate(1389.0,592.0) rotate(-90) scale(0.82,1)" font-size="10" text-anchor="middle" fill="#111">2100</text>
<line x1="1382.7" y1="570.0" x2="1382.7" y2="619.0" stroke="#111" stroke-width="0.7"/>
<circle cx="1382.7" cy="631.0" r="12" fill="#fff" stroke="#111" stroke-width="0.9"/>
<line x1="1370.7" y1="631.0" x2="1394.7" y2="631.0" stroke="#111" stroke-width="0.7"/>
<text transform="translate(1382.7,629.5) scale(0.85,1)" font-size="10" text-anchor="middle" fill="#111">3</text>
<text transform="translate(1382.7,641.0) scale(0.85,1)" font-size="10" text-anchor="middle" fill="#111">L</text>
<line x1="1675.6" y1="570.0" x2="1675.6" y2="570.0" stroke="#111" stroke-width="0.8"/>
<path d="M1675.6 570.0 A55 55 0 0 0 1730.3 623.4" fill="none" stroke="#111" stroke-width="0.8"/>
<line x1="1730.3" y1="570.0" x2="1730.3" y2="623.4" stroke="#111" stroke-width="0.8"/>
<text transform="translate(1703.5,579.0) scale(0.82,1)" font-size="9.5" text-anchor="middle" fill="#111">8DF-125</text>
<text transform="translate(1700.0,593.0) rotate(-90) scale(0.82,1)" font-size="10" text-anchor="middle" fill="#111">900</text>
<text transform="translate(1710.0,593.0) rotate(-90) scale(0.82,1)" font-size="10" text-anchor="middle" fill="#111">2100</text>
<line x1="1702.8" y1="570.0" x2="1702.8" y2="623.0" stroke="#111" stroke-width="0.7"/>
<text transform="translate(1719.0,609.0) scale(0.82,1)" font-size="10" text-anchor="middle" fill="#111">630</text>
<line x1="1702.0" y1="611.2" x2="1740.5" y2="611.2" stroke="#111" stroke-width="0.7"/>
<circle cx="1702.8" cy="635.7" r="12" fill="#fff" stroke="#111" stroke-width="0.9"/>
<line x1="1690.8" y1="635.7" x2="1714.8" y2="635.7" stroke="#111" stroke-width="0.7"/>
<text transform="translate(1702.8,634.2) scale(0.85,1)" font-size="10" text-anchor="middle" fill="#111">4</text>
<text transform="translate(1702.8,645.7) scale(0.85,1)" font-size="10" text-anchor="middle" fill="#111">P</text>
<circle cx="1428.0" cy="586.5" r="12" fill="#fff" stroke="#111" stroke-width="0.9"/>
<line x1="1416.0" y1="586.5" x2="1440.0" y2="586.5" stroke="#111" stroke-width="0.7"/>
<text transform="translate(1428.0,585.0) scale(0.85,1)" font-size="10" text-anchor="middle" fill="#111">1</text>
<text transform="translate(1428.0,596.5) scale(0.85,1)" font-size="10" text-anchor="middle" fill="#111">P</text>
<text transform="translate(1498.0,589.0) scale(0.78,1)" font-size="13" text-anchor="middle" font-weight="bold" fill="#111">KOMORA</text>
<line x1="1470.0" y1="591.0" x2="1525.0" y2="591.0" stroke="#111" stroke-width="0.7"/>
<line x1="1525.0" y1="591.0" x2="1549.6" y2="542.0" stroke="#111" stroke-width="0.8"/>
<circle cx="1549.6" cy="542" r="1.3" fill="#111"/>
<text transform="translate(1497.5,601.0) scale(0.82,1)" font-size="9.5" text-anchor="middle" fill="#111">KER.  DLAŽBA</text>
<text transform="translate(1492.0,612.0) scale(0.82,1)" font-size="10" text-anchor="middle" fill="#111">3,79  m²</text>
<text transform="translate(1588.0,589.5) scale(0.78,1)" font-size="13" text-anchor="middle" font-weight="bold" fill="#111">SCHODIŠTĚ</text>
<line x1="1559.0" y1="591.0" x2="1617.0" y2="591.0" stroke="#111" stroke-width="0.7"/>
<line x1="1617.0" y1="591.0" x2="1629.8" y2="544.5" stroke="#111" stroke-width="0.8"/>
<circle cx="1629.8" cy="544.5" r="1.3" fill="#111"/>
<text transform="translate(1587.0,603.0) scale(0.82,1)" font-size="9.5" text-anchor="middle" fill="#111">DŘEV.  OBKLAD</text>
<text transform="translate(1581.0,614.0) scale(0.82,1)" font-size="10" text-anchor="middle" fill="#111">4,82  m²</text>
<rect x="1741.8" y="374.7" width="17.8" height="44.5" fill="url(#xh)" stroke="#111" stroke-width="0.8"/>
<line x1="1741.8" y1="374.7" x2="1741.8" y2="419.0" stroke="#111" stroke-width="2.2"/>
<line x1="1759.6" y1="374.7" x2="1759.6" y2="419.0" stroke="#111" stroke-width="2.2"/>
<rect x="1740.0" y="419.0" width="9.0" height="5.0" fill="none" stroke="#111" stroke-width="2.0"/>
<rect x="1741.5" y="470.7" width="14.0" height="302.6" fill="url(#xh)" stroke="#111" stroke-width="0.8"/>
<rect x="1755.5" y="477" width="4" height="296" fill="url(#dh)"/>
<line x1="1741.5" y1="470.7" x2="1741.5" y2="554.7" stroke="#111" stroke-width="2.4"/>
<line x1="1741.5" y1="570.0" x2="1741.5" y2="773.3" stroke="#111" stroke-width="2.4"/>
<line x1="1760.0" y1="477.0" x2="1760.0" y2="686.0" stroke="#111" stroke-width="2.2"/>
<line x1="1760.0" y1="704.6" x2="1760.0" y2="773.3" stroke="#111" stroke-width="2.2"/>
<rect x="1738.0" y="470.0" width="8.0" height="5.0" fill="none" stroke="#111" stroke-width="2.0"/>
<line x1="1741.5" y1="773.3" x2="1760.0" y2="773.3" stroke="#111" stroke-width="2.2"/>
<rect x="1760.0" y="686.0" width="145.0" height="18.6" fill="url(#xh)" stroke="#111" stroke-width="0.8"/>
<line x1="1760.0" y1="686.0" x2="1905.0" y2="686.0" stroke="#111" stroke-width="2.2"/>
<line x1="1760.0" y1="704.6" x2="1905.0" y2="704.6" stroke="#111" stroke-width="2.2"/>
<circle cx="1788.4" cy="525.4" r="12" fill="#fff" stroke="#111" stroke-width="0.9"/>
<text transform="translate(1788.4,530.4) scale(0.8,1)" font-size="14" text-anchor="middle" fill="#111">GF</text>
<line x1="1777.0" y1="530.0" x2="1759.0" y2="537.0" stroke="#111" stroke-width="0.7"/>
<text transform="translate(1810.0,446.5) rotate(-90) scale(0.82,1)" font-size="10" text-anchor="middle" fill="#111">1160</text>
<text transform="translate(1819.0,446.5) rotate(-90) scale(0.82,1)" font-size="10" text-anchor="middle" fill="#111">2260</text>
<line x1="1813.0" y1="374.7" x2="1813.0" y2="485.0" stroke="#111" stroke-width="0.7"/>
<text transform="translate(1801.0,484.5) rotate(-90) scale(0.82,1)" font-size="10" text-anchor="middle" fill="#111">70</text>
<line x1="1876.7" y1="335.0" x2="1876.7" y2="686.0" stroke="#111" stroke-width="0.7"/>
<text transform="translate(1874.0,530.5) rotate(-90) scale(0.82,1)" font-size="10" text-anchor="middle" fill="#111">5190</text>
<text transform="translate(1900.0,538.0) scale(0.8,1)" font-size="16" text-anchor="start" font-weight="bold" fill="#111">G</text>
<text transform="translate(1880.0,549.0) scale(0.82,1)" font-size="9.5" text-anchor="start" fill="#111">SLINUTÁ</text>
<text transform="translate(1900.0,559.0) scale(0.82,1)" font-size="9.5" text-anchor="start" fill="#111">2</text>
<line x1="1740.5" y1="649.0" x2="1905.0" y2="649.0" stroke="#111" stroke-width="0.7"/>
<text transform="translate(1748.0,645.0) scale(0.82,1)" font-size="10" text-anchor="middle" fill="#111">240</text>
<text transform="translate(1767.0,658.0) scale(0.82,1)" font-size="10" text-anchor="middle" fill="#111">70</text>
<circle cx="1910" cy="663" r="12" fill="none" stroke="#111" stroke-width="0.9"/>
<text transform="translate(1884.0,681.0) rotate(-90) scale(0.82,1)" font-size="10" text-anchor="middle" fill="#111">70</text>
<circle cx="1701.0" cy="425.6" r="12" fill="#fff" stroke="#111" stroke-width="0.9"/>
<line x1="1689.0" y1="425.6" x2="1713.0" y2="425.6" stroke="#111" stroke-width="0.7"/>
<text transform="translate(1701.0,424.1) scale(0.85,1)" font-size="10" text-anchor="middle" fill="#111">5</text>
<text transform="translate(1701.0,435.6) scale(0.85,1)" font-size="10" text-anchor="middle" fill="#111">P</text>
<path d="M1673.0 358.0 A56 56 0 0 0 1727.8 414.2" fill="none" stroke="#111" stroke-width="0.8"/>
<line x1="1727.8" y1="360.0" x2="1727.8" y2="414.2" stroke="#111" stroke-width="0.8"/>
<line x1="1701.0" y1="360.0" x2="1701.0" y2="413.0" stroke="#111" stroke-width="0.7"/>
<text transform="translate(1700.0,386.0) rotate(-90) scale(0.82,1)" font-size="10" text-anchor="middle" fill="#111">900</text>
<text transform="translate(1710.0,386.0) rotate(-90) scale(0.82,1)" font-size="10" text-anchor="middle" fill="#111">2100</text>
<rect x="1594.2" y="404.0" width="30.5" height="11.4" fill="none" stroke="#111" stroke-width="0.8"/>
<text transform="translate(1609.5,413.0) scale(0.82,1)" font-size="10" text-anchor="middle" fill="#111">±0,000</text>
<text transform="translate(1523.0,424.5) scale(0.78,1)" font-size="13" text-anchor="middle" font-weight="bold" fill="#111">CHODBA</text>
<text transform="translate(1525.0,436.0) scale(0.82,1)" font-size="9.5" text-anchor="middle" fill="#111">KER.  DLAŽBA</text>
<text transform="translate(1521.0,446.0) scale(0.82,1)" font-size="10" text-anchor="middle" fill="#111">15,47  m²</text>
<rect x="1768.5" y="346.0" width="11.5" height="28.7" fill="none" stroke="#111" stroke-width="0.8" stroke-dasharray="3 2"/>
<line x1="1759.6" y1="374.7" x2="1905.0" y2="374.7" stroke="#111" stroke-width="2.2"/>
<text transform="translate(1775.0,394.0) scale(0.82,1)" font-size="10" text-anchor="middle" fill="#111">500</text>
<line x1="1760.0" y1="395.8" x2="1790.0" y2="395.8" stroke="#111" stroke-width="0.7"/>
<text transform="translate(1810.5,394.0) rotate(-90) scale(0.82,1)" font-size="10" text-anchor="middle" fill="#111">625</text>
<line x1="1813.0" y1="374.7" x2="1813.0" y2="420.0" stroke="#111" stroke-width="0.7"/>
<text transform="translate(1828.5,395.0) scale(0.85,1)" font-size="12" text-anchor="middle" font-weight="bold" fill="#111">EL</text>
<rect x="1790.0" y="374.7" width="30.0" height="8.9" fill="none" stroke="#111" stroke-width="0.7"/>
<rect x="1823.0" y="374.7" width="18.0" height="8.9" fill="none" stroke="#111" stroke-width="0.7"/>
<line x1="1790.0" y1="383.6" x2="1820.0" y2="374.7" stroke="#111" stroke-width="0.7"/>
<line x1="1823.0" y1="383.6" x2="1841.0" y2="374.7" stroke="#111" stroke-width="0.7"/>
<text transform="translate(1873.0,366.0) rotate(-90) scale(0.82,1)" font-size="10" text-anchor="middle" fill="#111">240</text>
<text transform="translate(1884.5,338.0) rotate(-90) scale(0.82,1)" font-size="10" text-anchor="middle" fill="#111">210</text>
<circle cx="1900.0" cy="420.5" r="12" fill="#fff" stroke="#111" stroke-width="0.9"/>
<text transform="translate(1900.0,425.5) scale(0.8,1)" font-size="14" text-anchor="middle" fill="#111">OF</text>
<line x1="1890.0" y1="390.0" x2="1905.0" y2="390.0" stroke="#111" stroke-width="0.7" stroke-dasharray="4 2 1 2"/>
<line x1="1890.0" y1="385.0" x2="1890.0" y2="400.0" stroke="#111" stroke-width="0.7"/>
<text transform="translate(1771.0,445.0) scale(0.82,1)" font-size="10" text-anchor="middle" fill="#111">800</text>
<text transform="translate(1771.0,454.0) scale(0.82,1)" font-size="10" text-anchor="middle" fill="#111">2100</text>
<line x1="1740.0" y1="446.5" x2="1798.0" y2="446.5" stroke="#111" stroke-width="0.7"/>
<text transform="translate(1737.5,432.0) rotate(-90) scale(0.82,1)" font-size="9.5" text-anchor="middle" fill="#111">8DF-150</text>
<circle cx="1717.6" cy="442.2" r="12" fill="#fff" stroke="#111" stroke-width="0.9"/>
<line x1="1705.6" y1="442.2" x2="1729.6" y2="442.2" stroke="#111" stroke-width="0.7"/>
<text transform="translate(1717.6,440.7) scale(0.85,1)" font-size="10" text-anchor="middle" fill="#111">3</text>
<text transform="translate(1717.6,452.2) scale(0.85,1)" font-size="10" text-anchor="middle" fill="#111">P</text>
<path d="M1749.0 470.7 A47 47 0 0 0 1795.0 423.0" fill="none" stroke="#111" stroke-width="0.8"/>
<line x1="1747.0" y1="424.0" x2="1747.0" y2="470.7" stroke="#111" stroke-width="0.7"/>
<line x1="1749.5" y1="424.0" x2="1749.5" y2="470.7" stroke="#111" stroke-width="0.7"/>
<line x1="1759.5" y1="422.0" x2="1759.5" y2="480.0" stroke="#111" stroke-width="0.7" stroke-dasharray="6 2 1.5 2"/>
<line x1="1760.0" y1="423.0" x2="1795.0" y2="423.0" stroke="#111" stroke-width="0.7"/>
<text transform="translate(1493.5,671.0) scale(0.78,1)" font-size="13" text-anchor="middle" font-weight="bold" fill="#111">OBÝVACÍ  POKOJ</text>
<text transform="translate(1493.0,684.0) scale(0.82,1)" font-size="9.5" text-anchor="middle" fill="#111">DŘEVĚNÁ  PODLAHA</text>
<text transform="translate(1491.0,694.0) scale(0.82,1)" font-size="10" text-anchor="middle" fill="#111">43,46  m²</text>
<rect x="1471.5" y="698.5" width="29.0" height="11.0" fill="none" stroke="#111" stroke-width="0.8"/>
<text transform="translate(1486.0,707.5) scale(0.82,1)" font-size="10" text-anchor="middle" fill="#111">±0,000</text>
<rect x="1191.8" y="570.0" width="152.7" height="35.6" fill="none" stroke="#111" stroke-width="0.8"/>
<line x1="1202.0" y1="570.0" x2="1202.0" y2="605.6" stroke="#111" stroke-width="0.7"/>
<line x1="1227.0" y1="570.0" x2="1227.0" y2="605.6" stroke="#111" stroke-width="0.7"/>
<line x1="1265.0" y1="570.0" x2="1265.0" y2="605.6" stroke="#111" stroke-width="0.7"/>
<line x1="1298.0" y1="570.0" x2="1298.0" y2="605.6" stroke="#111" stroke-width="0.7"/>
<line x1="1310.0" y1="570.0" x2="1310.0" y2="605.6" stroke="#111" stroke-width="0.7"/>
<line x1="1320.0" y1="570.0" x2="1320.0" y2="605.6" stroke="#111" stroke-width="0.7"/>
<line x1="1202.0" y1="570.0" x2="1227.0" y2="605.6" stroke="#111" stroke-width="0.7"/>
<line x1="1265.0" y1="570.0" x2="1298.0" y2="605.6" stroke="#111" stroke-width="0.7"/>
<text transform="translate(1213.0,603.0) scale(0.82,1)" font-size="8" text-anchor="middle" fill="#111">skříň</text>
<text transform="translate(1284.0,603.0) scale(0.82,1)" font-size="8" text-anchor="middle" fill="#111">skříň</text>
<text transform="translate(1257.0,582.0) scale(0.82,1)" font-size="8" text-anchor="middle" fill="#111">mv  trouba</text>
<text transform="translate(1258.0,590.0) scale(0.82,1)" font-size="8" text-anchor="middle" fill="#111">+pečicí</text>
<text transform="translate(1258.0,597.0) scale(0.82,1)" font-size="8" text-anchor="middle" fill="#111">trouba</text>
<rect x="1320.0" y="570.0" width="25.0" height="35.6" fill="none" stroke="#111" stroke-width="0.6" stroke-dasharray="3 2"/>
<path d="M1324 577 h2 M1328 577 h2 M1332 577 h2" stroke="#111" stroke-width="2"/>
<text transform="translate(1333.0,588.0) scale(0.82,1)" font-size="8" text-anchor="middle" fill="#111">lednice</text>
<text transform="translate(1333.0,596.0) scale(0.82,1)" font-size="8" text-anchor="middle" fill="#111">mrazák</text>
<line x1="1292.0" y1="605.6" x2="1292.0" y2="623.0" stroke="#111" stroke-width="0.7"/>
<text transform="translate(1293.0,612.0) rotate(-90) scale(0.82,1)" font-size="10" text-anchor="middle" fill="#111">900</text>
<polyline points="1245.3,777.0 1245.3,623.4 1320.0,623.4 1320.0,605.6" fill="none" stroke="#111" stroke-width="0.7" stroke-dasharray="6 2 1.5 2"/>
<line x1="1189.0" y1="645.0" x2="1320.0" y2="645.0" stroke="#111" stroke-width="0.7"/>
<text transform="translate(1218.5,641.0) scale(0.82,1)" font-size="10" text-anchor="middle" fill="#111">900</text>
<text transform="translate(1281.0,641.0) scale(0.82,1)" font-size="10" text-anchor="middle" fill="#111">1200</text>
<line x1="1188.3" y1="648.5" x2="1195.3" y2="641.5" stroke="#111" stroke-width="1.0"/>
<line x1="1241.8" y1="648.5" x2="1248.8" y2="641.5" stroke="#111" stroke-width="1.0"/>
<line x1="1316.5" y1="648.5" x2="1323.5" y2="641.5" stroke="#111" stroke-width="1.0"/>
<rect x="1191.8" y="655.0" width="37.0" height="37.0" fill="none" stroke="#111" stroke-width="0.7"/>
<line x1="1191.8" y1="655.0" x2="1228.8" y2="692.0" stroke="#111" stroke-width="0.7" stroke-dasharray="3 2"/>
<line x1="1228.8" y1="655.0" x2="1191.8" y2="692.0" stroke="#111" stroke-width="0.7" stroke-dasharray="3 2"/>
<text transform="translate(1209.5,653.0) scale(0.82,1)" font-size="8" text-anchor="middle" fill="#111">myčka</text>
<rect x="1191.8" y="692.0" width="35.5" height="163.0" fill="none" stroke="#111" stroke-width="0.8"/>
<rect x="1193.7" y="693.0" width="32.0" height="54.0" fill="none" stroke="#111" stroke-width="0.7"/>
<rect x="1196.0" y="695.0" width="26.0" height="25.0" fill="none" stroke="#111" stroke-width="0.7"/>
<line x1="1197.0" y1="725.0" x2="1223.0" y2="725.0" stroke="#111" stroke-width="0.5"/>
<line x1="1197.0" y1="728.0" x2="1223.0" y2="728.0" stroke="#111" stroke-width="0.5"/>
<line x1="1197.0" y1="731.0" x2="1223.0" y2="731.0" stroke="#111" stroke-width="0.5"/>
<line x1="1197.0" y1="734.0" x2="1223.0" y2="734.0" stroke="#111" stroke-width="0.5"/>
<line x1="1197.0" y1="737.0" x2="1223.0" y2="737.0" stroke="#111" stroke-width="0.5"/>
<line x1="1197.0" y1="740.0" x2="1223.0" y2="740.0" stroke="#111" stroke-width="0.5"/>
<line x1="1197.0" y1="743.0" x2="1223.0" y2="743.0" stroke="#111" stroke-width="0.5"/>
<line x1="1227.3" y1="692.0" x2="1227.3" y2="818.6" stroke="#111" stroke-width="0.8"/>
<line x1="1191.8" y1="801.0" x2="1227.3" y2="801.0" stroke="#111" stroke-width="0.8"/>
<line x1="1227.3" y1="818.6" x2="1318.0" y2="818.6" stroke="#111" stroke-width="0.8"/>
<line x1="1318.0" y1="818.6" x2="1318.0" y2="855.1" stroke="#111" stroke-width="0.8"/>
<line x1="1209.8" y1="692.0" x2="1209.8" y2="855.0" stroke="#111" stroke-width="0.6" stroke-dasharray="6 2 1.5 2"/>
<rect x="1246.3" y="820.0" width="35.0" height="35.0" fill="none" stroke="#111" stroke-width="0.8"/>
<circle cx="1254" cy="828" r="4" fill="none" stroke="#111" stroke-width="0.7"/>
<circle cx="1271" cy="829" r="5" fill="none" stroke="#111" stroke-width="0.7"/>
<circle cx="1254" cy="845" r="5" fill="none" stroke="#111" stroke-width="0.7"/>
<circle cx="1273" cy="846" r="4" fill="none" stroke="#111" stroke-width="0.7"/>
<text transform="translate(1184.0,736.0) scale(0.82,1)" font-size="10" text-anchor="middle" fill="#111">450</text>
<line x1="1162.0" y1="736.8" x2="1905.0" y2="736.8" stroke="#111" stroke-width="0.7"/>
<text transform="translate(1467.0,736.0) scale(0.82,1)" font-size="10" text-anchor="middle" fill="#111">9150</text>
<text transform="translate(1257.0,699.0) rotate(-90) scale(0.82,1)" font-size="10" text-anchor="middle" fill="#111">4750</text>
<circle cx="1287.2" cy="711.0" r="12" fill="#fff" stroke="#111" stroke-width="0.9"/>
<text transform="translate(1287.2,716.0) scale(0.8,1)" font-size="14" text-anchor="middle" fill="#111">QB</text>
<line x1="1275.0" y1="714.0" x2="1246.3" y2="723.6" stroke="#111" stroke-width="0.7"/>
<polyline points="1246.3,692.0 1246.3,777.7" fill="none" stroke="#111" stroke-width="0.7" stroke-dasharray="6 2 1.5 2"/>
<path d="M1246.3 777.7 Q1248 801 1259.5 801 H1318 V777" fill="none" stroke="#111" stroke-width="0.7" stroke-dasharray="6 2 1.5 2"/>
<text transform="translate(1281.5,778.0) scale(0.82,1)" font-size="10" text-anchor="middle" fill="#111">1200</text>
<line x1="1244.0" y1="779.0" x2="1320.0" y2="779.0" stroke="#111" stroke-width="0.7"/>
<line x1="1242.8" y1="782.5" x2="1249.8" y2="775.5" stroke="#111" stroke-width="1.0"/>
<line x1="1314.5" y1="782.5" x2="1321.5" y2="775.5" stroke="#111" stroke-width="1.0"/>
<text transform="translate(1335.0,823.0) rotate(-90) scale(0.82,1)" font-size="10" text-anchor="middle" fill="#111">900</text>
<line x1="1337.0" y1="801.0" x2="1337.0" y2="855.0" stroke="#111" stroke-width="0.7"/>
<line x1="1333.5" y1="804.5" x2="1340.5" y2="797.5" stroke="#111" stroke-width="1.0"/>
<line x1="1333.5" y1="858.5" x2="1340.5" y2="851.5" stroke="#111" stroke-width="1.0"/>
<text transform="translate(1251.5,862.0) rotate(-90) scale(0.82,1)" font-size="10" text-anchor="middle" fill="#111">450</text>
<rect x="1258.0" y="855.0" width="8.8" height="36.0" fill="none" stroke="#111" stroke-width="0.7"/>
<circle cx="1228.8" cy="899.8" r="12" fill="#fff" stroke="#111" stroke-width="0.9"/>
<text transform="translate(1228.8,904.8) scale(0.8,1)" font-size="14" text-anchor="middle" fill="#111">OD</text>
<line x1="1240.0" y1="896.0" x2="1259.5" y2="887.3" stroke="#111" stroke-width="0.7"/>
<line x1="1164.5" y1="928.2" x2="1905.0" y2="928.2" stroke="#111" stroke-width="0.7"/>
<line x1="1164.5" y1="952.4" x2="1905.0" y2="952.4" stroke="#111" stroke-width="0.7"/>
<line x1="1164.5" y1="895.0" x2="1164.5" y2="955.0" stroke="#111" stroke-width="0.7"/>
<line x1="1326.7" y1="897.0" x2="1326.7" y2="931.0" stroke="#111" stroke-width="0.7"/>
<line x1="1741.1" y1="897.0" x2="1741.1" y2="931.0" stroke="#111" stroke-width="0.7"/>
<line x1="1839.0" y1="897.0" x2="1839.0" y2="931.0" stroke="#111" stroke-width="0.7"/>
<line x1="1161.0" y1="931.7" x2="1168.0" y2="924.7" stroke="#111" stroke-width="1.0"/>
<line x1="1323.2" y1="931.7" x2="1330.2" y2="924.7" stroke="#111" stroke-width="1.0"/>
<line x1="1737.6" y1="931.7" x2="1744.6" y2="924.7" stroke="#111" stroke-width="1.0"/>
<line x1="1835.5" y1="931.7" x2="1842.5" y2="924.7" stroke="#111" stroke-width="1.0"/>
<line x1="1161.0" y1="955.9" x2="1168.0" y2="948.9" stroke="#111" stroke-width="1.0"/>
<text transform="translate(1246.3,926.0) scale(0.82,1)" font-size="10" text-anchor="middle" fill="#111">2700</text>
<text transform="translate(1534.0,926.0) scale(0.82,1)" font-size="10" text-anchor="middle" fill="#111">6900</text>
<text transform="translate(1534.0,936.0) scale(0.82,1)" font-size="10" text-anchor="middle" fill="#111">2460</text>
<text transform="translate(1790.0,926.0) scale(0.82,1)" font-size="10" text-anchor="middle" fill="#111">1625</text>
<text transform="translate(1657.0,951.0) scale(0.82,1)" font-size="10" text-anchor="middle" fill="#111">16400</text>
<text transform="translate(1899.0,926.0) scale(0.82,1)" font-size="10" text-anchor="start" fill="#111">210</text>
<text transform="translate(1899.0,936.0) scale(0.82,1)" font-size="10" text-anchor="start" fill="#111">246</text>
<circle cx="1427.5" cy="812.7" r="12" fill="#fff" stroke="#111" stroke-width="0.9"/>
<text transform="translate(1427.5,818.1) scale(0.8,1)" font-size="15" text-anchor="middle" fill="#111">N1</text>
<line x1="1422.0" y1="824.0" x2="1414.4" y2="844.9" stroke="#111" stroke-width="0.7"/>
<text transform="translate(1400.0,831.0) scale(0.82,1)" font-size="10" text-anchor="middle" fill="#111">3450</text>
<line x1="1337.0" y1="833.2" x2="1500.0" y2="833.2" stroke="#111" stroke-width="0.7"/>
<rect x="1347.2" y="844.9" width="151.9" height="19.0" fill="none" stroke="#111" stroke-width="0.8" stroke-dasharray="5 3"/>
<text transform="translate(1444.0,853.5) scale(0.82,1)" font-size="9.5" text-anchor="middle" fill="#111">1x  SPOJITÝ  HEB240-7400</text>
<text transform="translate(1451.0,842.0) scale(0.82,1)" font-size="7.5" text-anchor="middle" fill="#111">L=2500  mm</text>
<text transform="translate(1358.0,887.5) rotate(-90) scale(0.82,1)" font-size="10" text-anchor="middle" fill="#111">1000</text>
<text transform="translate(1368.0,887.5) rotate(-90) scale(0.82,1)" font-size="10" text-anchor="middle" fill="#111">2370</text>
<line x1="1362.0" y1="862.0" x2="1362.0" y2="897.0" stroke="#111" stroke-width="0.7"/>
<circle cx="1430.4" cy="906.2" r="12" fill="#fff" stroke="#111" stroke-width="0.9"/>
<text transform="translate(1430.4,912.0) scale(0.8,1)" font-size="16" text-anchor="middle" fill="#111">8</text>
<line x1="1430.4" y1="872.0" x2="1430.4" y2="894.0" stroke="#111" stroke-width="0.7"/>
<circle cx="1649.6" cy="812.7" r="12" fill="#fff" stroke="#111" stroke-width="0.9"/>
<text transform="translate(1649.6,818.1) scale(0.8,1)" font-size="15" text-anchor="middle" fill="#111">N1</text>
<line x1="1645.0" y1="824.0" x2="1637.3" y2="844.9" stroke="#111" stroke-width="0.7"/>
<rect x="1554.0" y="844.9" width="150.6" height="19.0" fill="none" stroke="#111" stroke-width="0.8" stroke-dasharray="5 3"/>
<text transform="translate(1670.0,842.0) scale(0.82,1)" font-size="7.5" text-anchor="middle" fill="#111">L=2500  mm</text>
<text transform="translate(1585.0,818.0) scale(0.82,1)" font-size="9.5" text-anchor="middle" fill="#111">OCELOVÝ  SLOUPEK</text>
<line x1="1548.0" y1="820.0" x2="1617.0" y2="820.0" stroke="#111" stroke-width="0.7"/>
<text transform="translate(1587.0,828.0) scale(0.82,1)" font-size="9.5" text-anchor="middle" fill="#111">JACKL  120x10-2615</text>
<line x1="1548.0" y1="820.0" x2="1535.0" y2="858.0" stroke="#111" stroke-width="0.7"/>
<circle cx="1527.8" cy="861" r="22" fill="none" stroke="#111" stroke-width="0.8"/>
<rect x="1530.0" y="858.0" width="7.0" height="7.0" fill="none" stroke="#111" stroke-width="1.6"/>
<rect x="1525.0" y="868.5" width="6.0" height="6.5" fill="none" stroke="#111" stroke-width="1.6"/>
<rect x="1531.0" y="868.5" width="6.0" height="6.5" fill="none" stroke="#111" stroke-width="1.6"/>
<text transform="translate(1518.0,864.0) rotate(-90) scale(0.82,1)" font-size="10" text-anchor="middle" fill="#111">120</text>
<text transform="translate(1518.0,903.0) scale(0.85,1)" font-size="24" text-anchor="middle" fill="#111">G</text>
<circle cx="1637.9" cy="906.8" r="12" fill="#fff" stroke="#111" stroke-width="0.9"/>
<text transform="translate(1637.9,912.6) scale(0.8,1)" font-size="16" text-anchor="middle" fill="#111">9</text>
<line x1="1637.9" y1="872.0" x2="1637.9" y2="894.0" stroke="#111" stroke-width="0.7"/>
<text transform="translate(1704.5,887.5) rotate(-90) scale(0.82,1)" font-size="10" text-anchor="middle" fill="#111">1000</text>
<text transform="translate(1714.5,887.5) rotate(-90) scale(0.82,1)" font-size="10" text-anchor="middle" fill="#111">2370</text>
<line x1="1708.0" y1="863.0" x2="1708.0" y2="895.0" stroke="#111" stroke-width="0.7"/>
<text transform="translate(1739.5,814.0) rotate(-90) scale(0.82,1)" font-size="9.5" text-anchor="middle" fill="#111">SENDWIX  8DF-175</text>
<polyline points="1756.6,773.3 1756.6,855.0" fill="none" stroke="#111" stroke-width="0.7" stroke-dasharray="6 2 1.5 2"/>
<polyline points="1741.0,773.3 1741.0,855.0" fill="none" stroke="#111" stroke-width="0.7" stroke-dasharray="6 2 1.5 2"/>
<line x1="1776.2" y1="704.6" x2="1776.2" y2="855.1" stroke="#111" stroke-width="0.7"/>
<line x1="1810.3" y1="704.6" x2="1810.3" y2="882.0" stroke="#111" stroke-width="0.7"/>
<text transform="translate(1774.0,725.0) rotate(-90) scale(0.82,1)" font-size="10" text-anchor="middle" fill="#111">1125</text>
<text transform="translate(1752.0,728.0) rotate(-90) scale(0.82,1)" font-size="10" text-anchor="middle" fill="#111">240</text>
<text transform="translate(1807.5,779.0) rotate(-90) scale(0.82,1)" font-size="10" text-anchor="middle" fill="#111">2500</text>
<text transform="translate(1772.5,812.7) rotate(-90) scale(0.82,1)" font-size="10" text-anchor="middle" fill="#111">1375</text>
<text transform="translate(1784.5,812.7) rotate(-90) scale(0.82,1)" font-size="10" text-anchor="middle" fill="#111">2100</text>
<text transform="translate(1808.0,864.0) rotate(-90) scale(0.82,1)" font-size="10" text-anchor="middle" fill="#111">240</text>
<text transform="translate(1809.0,891.5) rotate(-90) scale(0.82,1)" font-size="10" text-anchor="middle" fill="#111">210</text>
<text transform="translate(1868.0,695.8) rotate(-90) scale(0.82,1)" font-size="10" text-anchor="middle" fill="#111">240</text>
<circle cx="1886.3" cy="812.7" r="12" fill="#fff" stroke="#111" stroke-width="0.9"/>
<text transform="translate(1886.3,818.1) scale(0.8,1)" font-size="15" text-anchor="middle" fill="#111">N1</text>
<line x1="1882.0" y1="824.0" x2="1874.0" y2="844.9" stroke="#111" stroke-width="0.7"/>
<rect x="1842.0" y="844.9" width="70.0" height="19.0" fill="none" stroke="#111" stroke-width="0.8" stroke-dasharray="5 3"/>
<text transform="translate(1872.0,887.5) rotate(-90) scale(0.82,1)" font-size="10" text-anchor="middle" fill="#111">1000</text>
<text transform="translate(1882.0,887.5) rotate(-90) scale(0.82,1)" font-size="10" text-anchor="middle" fill="#111">2370</text>
<text transform="translate(1900.0,890.0) rotate(-90) scale(0.82,1)" font-size="9.5" text-anchor="middle" fill="#111">SE</text></svg>
<!-- DRAW_END -->
<svg class="a" style="left:1908px;top:164px" width="10" height="8" viewBox="0 0 10 8"><path d="M5 0.5 L9.5 7.5 H0.5 Z" fill="#8a8a8a" stroke="#8a8a8a" stroke-width="0.8" stroke-linejoin="round"/></svg>
<div class="a" style="left:1908px;top:253px;width:9px;height:777px;border-radius:5px;background:#8a8a8a"></div>
<svg class="a" style="left:1908px;top:1037px" width="10" height="8" viewBox="0 0 10 8"><path d="M0.5 0.5 H9.5 L5 7.5 Z" fill="#8a8a8a" stroke="#8a8a8a" stroke-width="0.8" stroke-linejoin="round"/></svg>
<svg class="a" style="left:968px;top:1051px" width="8" height="10" viewBox="0 0 8 10"><path d="M7.5 0.5 V9.5 L0.5 5 Z" fill="#8a8a8a" stroke="#8a8a8a" stroke-width="0.8" stroke-linejoin="round"/></svg>
<div class="a" style="left:982px;top:1051px;width:628px;height:9px;border-radius:5px;background:#8a8a8a"></div>
<svg class="a" style="left:1893px;top:1051px" width="8" height="10" viewBox="0 0 8 10"><path d="M0.5 0.5 V9.5 L7.5 5 Z" fill="#8a8a8a" stroke="#8a8a8a" stroke-width="0.8" stroke-linejoin="round"/></svg>

</body></html>
